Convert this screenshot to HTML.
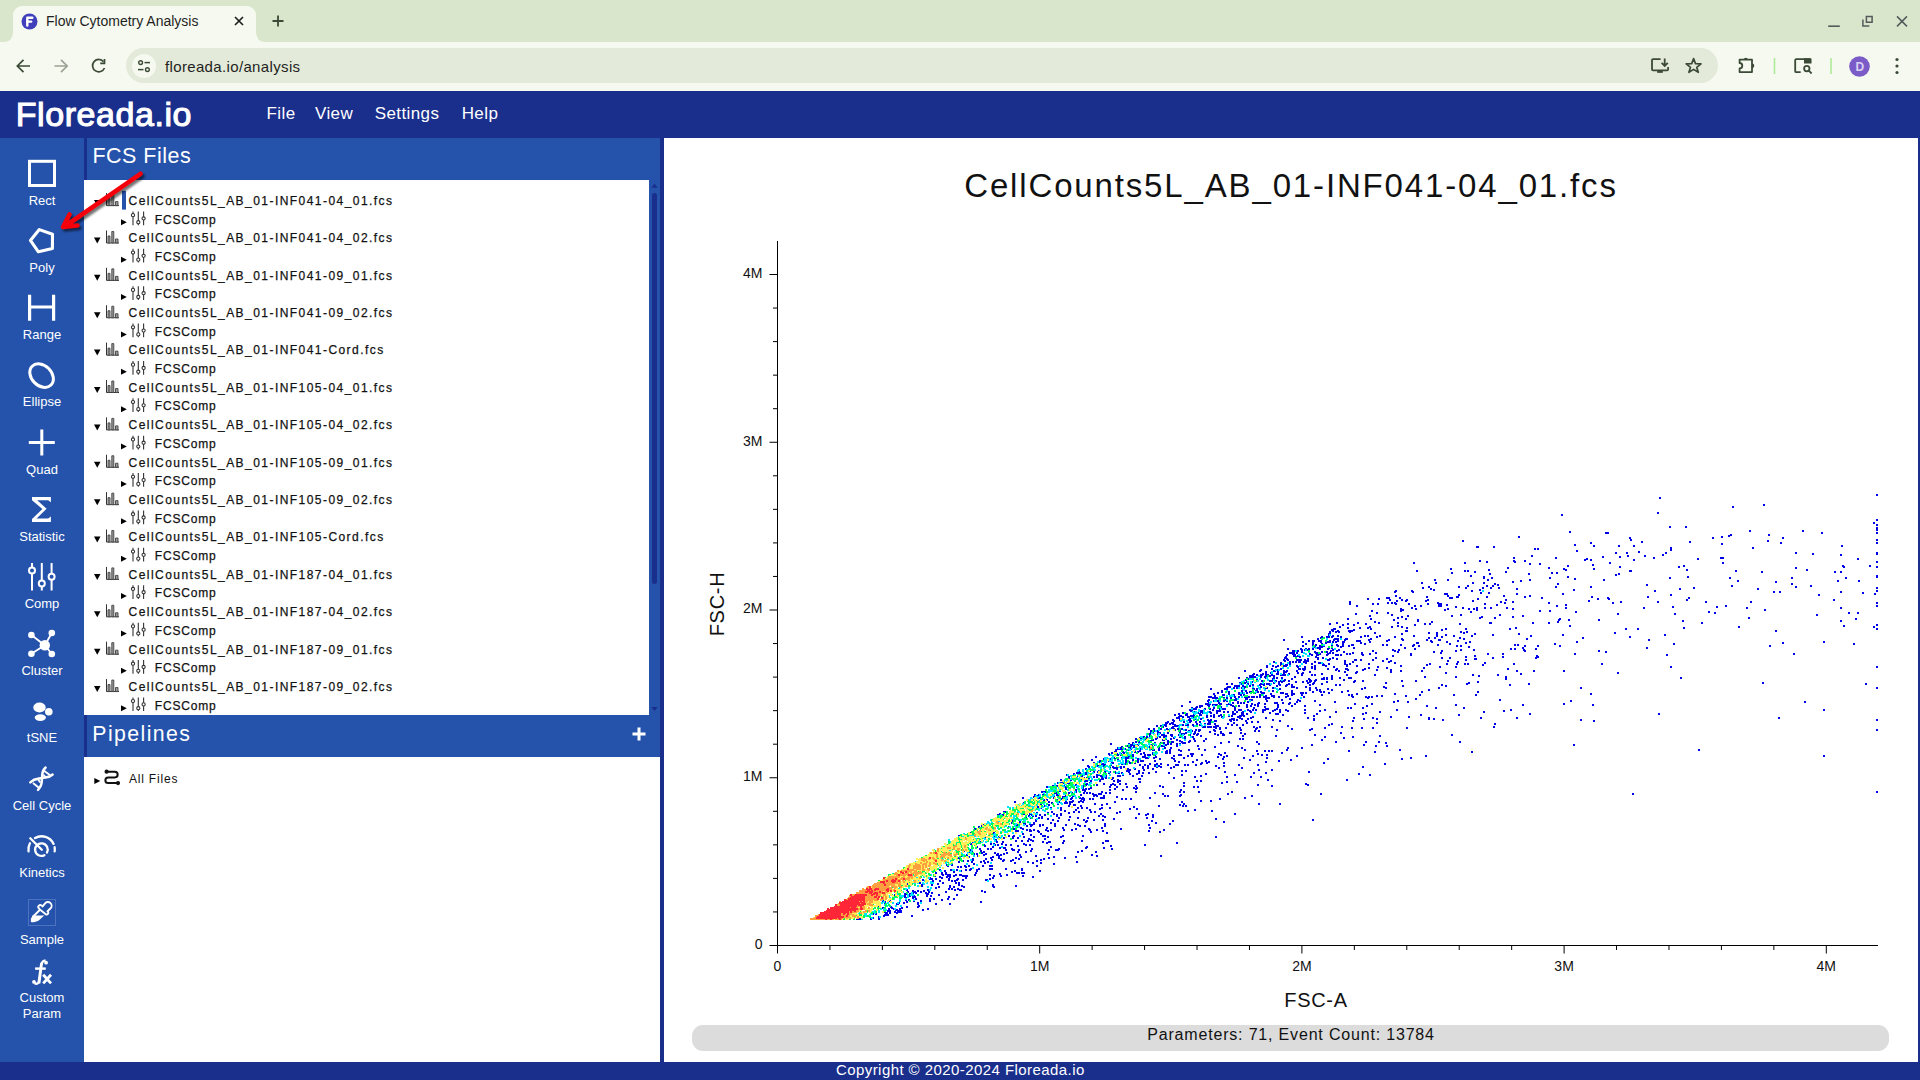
<!DOCTYPE html><html><head><meta charset="utf-8"><style>
html,body{margin:0;padding:0;width:1920px;height:1080px;overflow:hidden;background:#fff;font-family:"Liberation Sans",sans-serif}
.t{position:absolute;line-height:1;white-space:nowrap}
.r{position:absolute}
svg{position:absolute;overflow:visible}
</style></head><body>
<div class="r" style="left:0px;top:0px;width:1920px;height:42px;background:#d9e6cc;"></div>
<div class="r" style="left:13px;top:6px;width:243px;height:36px;background:#f6f9ef;border-radius:9px 9px 0 0"></div>
<svg style="left:0;top:30px" width="280" height="12"><path d="M3 12 Q13 12 13 2 L13 12Z" fill="#f6f9ef"/><path d="M266 12 Q256 12 256 2 L256 12Z" fill="#f6f9ef"/></svg>
<svg style="left:21px;top:13px" width="17" height="17" viewBox="0 0 17 17"><circle cx="8.5" cy="8.5" r="8" fill="#4040bd"/><path d="M6.3 12.6V4.8h5" stroke="#fff" stroke-width="2.4" fill="none" stroke-linecap="round" stroke-linejoin="round"/><path d="M6.3 8.7h4" stroke="#fff" stroke-width="2.2" stroke-linecap="round"/></svg>
<div class="t" style="left:46.00px;top:14.45px;font-size:14px;color:#1f1f1f;">Flow Cytometry Analysis</div>
<svg style="left:234px;top:16px" width="10" height="10"><path d="M1 1L9 9M9 1L1 9" stroke="#1f1f1f" stroke-width="1.7"/></svg>
<svg style="left:272px;top:15px" width="12" height="12"><path d="M6 0.5V11.5M0.5 6H11.5" stroke="#3b4a36" stroke-width="1.8"/></svg>
<svg style="left:1820px;top:8px" width="95" height="30" viewBox="1820 8 95 30" stroke="#55595c" fill="none"><path d="M1828.2 26.2H1839.8" stroke-width="1.6"/><path d="M1866.4 16.4H1872.1V22.2H1866.4Z" stroke-width="1.5"/><path d="M1862.9 19.5V26H1869.3" stroke-width="1.5"/><path d="M1897 16.4L1907 26.4M1907 16.4L1897 26.4" stroke-width="1.5"/></svg>
<div class="r" style="left:0px;top:42px;width:1920px;height:49px;background:#f6f9ef;"></div>
<div class="r" style="left:126px;top:48px;width:1592px;height:35px;background:#e3ead9;border-radius:17.5px"></div>
<svg style="left:132px;top:54px" width="24" height="24"><circle cx="12" cy="12" r="12" fill="#f6f9ef"/><circle cx="8.6" cy="8.6" r="1.9" stroke="#3b4a36" stroke-width="1.4" fill="none"/><path d="M12.5 8.6H18" stroke="#3b4a36" stroke-width="1.5"/><circle cx="15.4" cy="15.6" r="1.9" stroke="#3b4a36" stroke-width="1.4" fill="none"/><path d="M6 15.6H11.5" stroke="#3b4a36" stroke-width="1.5"/></svg>
<svg style="left:12px;top:55px" width="100" height="22"><path d="M5.5 11H18M11.5 4.8L5.3 11L11.5 17.2" stroke="#3b4a36" stroke-width="1.7" fill="none"/><path d="M42.5 11H55M49 4.8L55.2 11L49 17.2" stroke="#9aa294" stroke-width="1.7" fill="none"/><path d="M91.5 6.6A6.2 6.2 0 1 0 92.5 13" stroke="#3b4a36" stroke-width="1.7" fill="none"/><path d="M92.5 4V8.3H88.2" stroke="#3b4a36" stroke-width="1.7" fill="none"/></svg>
<div class="t" style="left:165.00px;top:58.60px;font-size:15px;color:#1f1f1f;letter-spacing:0.35px;">floreada.io/analysis</div>
<svg style="left:1640px;top:50px" width="275" height="32" viewBox="1640 50 275 32"><path d="M1660.6 59.1H1653A1 1 0 0 0 1652 60.1V69.3A1 1 0 0 0 1653 70.3H1667.1A1 1 0 0 0 1668.1 69.3V66.9" stroke="#3b4a36" stroke-width="1.8" fill="none"/><path d="M1657.2 71.9H1662.8" stroke="#3b4a36" stroke-width="1.9"/><path d="M1664.7 58.4V65.8M1661.6 62.8L1664.7 65.9L1667.8 62.8" stroke="#3b4a36" stroke-width="1.8" fill="none"/><path d="M1693.6 58.6L1695.5 63.6L1701 63.9L1696.7 67.3L1698.3 72.3L1693.6 69.4L1688.9 72.3L1690.5 67.3L1686.2 63.9L1691.7 63.6Z" stroke="#3b4a36" stroke-width="1.7" fill="none" stroke-linejoin="round"/><path d="M1739.6 59.6H1752V72.1H1739.6V68.4A2.7 2.7 0 0 0 1739.6 63Z" stroke="#3b4a36" stroke-width="1.8" fill="none" stroke-linejoin="round"/><path d="M1743.8 59.8A2 2 0 0 1 1747.8 59.8Z M1752 63.4A2.3 2.3 0 0 1 1752 68Z" fill="#3b4a36"/><path d="M1774.5 58V74" stroke="#aeea98" stroke-width="1.6"/><path d="M1800.7 72.2H1796.2A1 1 0 0 1 1795.2 71.2V60.2A1 1 0 0 1 1796.2 59.2H1810.5" stroke="#3b4a36" stroke-width="1.8" fill="none"/><path d="M1804 58.3H1810.3A1.2 1.2 0 0 1 1811.5 59.5V63.5H1804Z" fill="#3b4a36"/><circle cx="1806.8" cy="68.6" r="2.7" stroke="#3b4a36" stroke-width="1.8" fill="none"/><path d="M1808.8 70.7L1811.6 73.5" stroke="#3b4a36" stroke-width="1.8"/><path d="M1831 58V74" stroke="#aeea98" stroke-width="1.6"/><circle cx="1859.5" cy="66.5" r="10.3" fill="#7b5bc7"/><text x="1859.8" y="71" font-size="12" font-weight="700" font-family="Liberation Sans" fill="#dcd2f2" text-anchor="middle">D</text><circle cx="1897" cy="59.5" r="1.6" fill="#3b4a36"/><circle cx="1897" cy="66" r="1.6" fill="#3b4a36"/><circle cx="1897" cy="72.5" r="1.6" fill="#3b4a36"/></svg>
<div class="r" style="left:0px;top:91px;width:1920px;height:47px;background:#1a2e8c;"></div>
<div class="t" style="left:15.80px;top:96.52px;font-size:34px;color:#fff;letter-spacing:0.55px;-webkit-text-stroke:1.1px #fff;">Floreada.io</div>
<div class="t" style="left:266.50px;top:105.41px;font-size:17px;color:#fff;letter-spacing:0.4px;">File</div>
<div class="t" style="left:315.00px;top:105.41px;font-size:17px;color:#fff;letter-spacing:0.4px;">View</div>
<div class="t" style="left:374.70px;top:105.41px;font-size:17px;color:#fff;letter-spacing:0.4px;">Settings</div>
<div class="t" style="left:461.70px;top:105.41px;font-size:17px;color:#fff;letter-spacing:0.4px;">Help</div>
<div class="r" style="left:0px;top:138px;width:84px;height:924px;background:#2553ab;"></div>
<div class="t" style="left:-958.00px;width:2000px;text-align:center;top:193.80px;font-size:13px;color:#fff;">Rect</div>
<div class="t" style="left:-958.00px;width:2000px;text-align:center;top:261.00px;font-size:13px;color:#fff;">Poly</div>
<div class="t" style="left:-958.00px;width:2000px;text-align:center;top:328.20px;font-size:13px;color:#fff;">Range</div>
<div class="t" style="left:-958.00px;width:2000px;text-align:center;top:395.40px;font-size:13px;color:#fff;">Ellipse</div>
<div class="t" style="left:-958.00px;width:2000px;text-align:center;top:462.60px;font-size:13px;color:#fff;">Quad</div>
<div class="t" style="left:-958.00px;width:2000px;text-align:center;top:529.80px;font-size:13px;color:#fff;">Statistic</div>
<div class="t" style="left:-958.00px;width:2000px;text-align:center;top:597.00px;font-size:13px;color:#fff;">Comp</div>
<div class="t" style="left:-958.00px;width:2000px;text-align:center;top:664.20px;font-size:13px;color:#fff;">Cluster</div>
<div class="t" style="left:-958.00px;width:2000px;text-align:center;top:731.40px;font-size:13px;color:#fff;">tSNE</div>
<div class="t" style="left:-958.00px;width:2000px;text-align:center;top:798.60px;font-size:13px;color:#fff;">Cell Cycle</div>
<div class="t" style="left:-958.00px;width:2000px;text-align:center;top:865.80px;font-size:13px;color:#fff;">Kinetics</div>
<div class="t" style="left:-958.00px;width:2000px;text-align:center;top:933.00px;font-size:13px;color:#fff;">Sample</div>
<div class="t" style="left:-958.00px;width:2000px;text-align:center;top:990.70px;font-size:13px;color:#fff;">Custom</div>
<div class="t" style="left:-958.00px;width:2000px;text-align:center;top:1007.00px;font-size:13px;color:#fff;">Param</div>
<svg style="left:0;top:138px" width="84" height="900" viewBox="0 138 84 900"><rect x="29.5" y="161.3" width="25" height="24.2" stroke="#fff" stroke-width="3" fill="none"/><path d="M39.3 229.6L52.5 234.3L52.4 248.4L38.4 251.8L30.4 240.4Z" stroke="#fff" stroke-width="3.1" fill="none" stroke-linejoin="round"/><path d="M29.6 294.8V320.8M53.6 294.8V320.8M29.6 307H53.6" stroke="#fff" stroke-width="3.2" fill="none"/><ellipse cx="41.6" cy="375.6" rx="13.3" ry="10" transform="rotate(45 41.6 375.6)" stroke="#fff" stroke-width="3" fill="none"/><path d="M41.8 429.6V455.6M28.8 442.6H54.8" stroke="#fff" stroke-width="3" fill="none"/><path d="M32 496.9H50.9V502.3L48.2 500.2H37.2L46.6 508.8L36.6 518.6H48.2L50.9 516.5V521.9H32V519.1L42.4 509L32 500.2Z" fill="#fff"/><path d="M32 563V567.5M32 573.5V590.4M41.8 563V580.5M41.8 586.5V590.4M51.6 563V573.8M51.6 579.8V590.4" stroke="#fff" stroke-width="2" fill="none"/><circle cx="32" cy="570.5" r="3" stroke="#fff" stroke-width="2" fill="none"/><circle cx="41.8" cy="583.5" r="3" stroke="#fff" stroke-width="2" fill="none"/><circle cx="51.6" cy="576.8" r="3" stroke="#fff" stroke-width="2" fill="none"/><path d="M31.4 635L44.8 645.3L51.8 633M31.4 653.8L44.8 645.3L51.8 654" stroke="#fff" stroke-width="1.8" fill="none"/><circle cx="44.8" cy="645.3" r="5.2" fill="#fff"/><circle cx="31.4" cy="635" r="3.3" fill="#fff"/><circle cx="51.8" cy="633" r="3.3" fill="#fff"/><circle cx="31.4" cy="653.8" r="3.3" fill="#fff"/><circle cx="51.8" cy="654" r="3.3" fill="#fff"/><ellipse cx="39.5" cy="707.5" rx="6.2" ry="5" fill="#fff"/><circle cx="48.8" cy="711.8" r="3.8" fill="#fff"/><ellipse cx="40.3" cy="717.6" rx="5.6" ry="3.4" fill="#fff"/><g stroke="#fff" fill="none" stroke-width="2.5" stroke-linecap="round"><path d="M45.6 767.5C41 772 42.5 776 42 778C41.5 781 43 785 38 789.8"/><path d="M30.3 782.3C35 778 38 779 42 778C46 777 49 778 52.6 774.5"/><path d="M44.3 771L49.2 774.6M44 775.2L45.4 777.2M33.6 783.4L38.3 787.3M38.5 780L39.9 782" stroke-width="1.9"/></g><g stroke="#fff" fill="none" stroke-width="2.3" stroke-linecap="round"><path d="M28.53 851.34A13.2 13.2 0 0 1 29.95 843.30M35.00 838.07A13.2 13.2 0 0 1 53.56 843.92M54.60 847.21A13.2 13.2 0 0 1 54.67 851.34M44.36 855.16A6.3 6.3 0 1 1 46.96 852.56M30.3 838.2L41.8 849.7"/></g><rect x="28.5" y="899.5" width="27" height="26" stroke="#4d73c0" stroke-width="1" fill="none"/><g stroke="#fff" stroke-width="1.9" fill="none" stroke-linejoin="round"><path d="M40.2 909.8L38.9 908.3A1.9 1.9 0 0 1 41.6 905.6L42.6 906.4L45.3 903.2A3.6 3.6 0 0 1 50.6 908.3L47.5 911.3L48.2 912A1.9 1.9 0 0 1 46 914.6Z"/><path d="M40 909.8L33.2 916.5C32 918 31.5 920.5 31.8 921.8"/></g><path d="M32.6 915.4H44.2L38.8 920.5C36.5 921.8 33.5 922.5 31.3 922.3C31 920 31.8 917 32.6 915.4Z" fill="#fff"/></svg>
<svg style="left:0;top:950px" width="84" height="40" viewBox="0 950 84 40"><g fill="#fff"><path d="M40.2 962.8H43.1L40.4 983.4H37.3Z"/><rect x="35.1" y="967.4" width="10.7" height="2.4"/><circle cx="46.1" cy="962.7" r="1.9"/><circle cx="34.0" cy="981.9" r="1.9"/></g><g stroke="#fff" fill="none" stroke-width="2.3"><path d="M41.6 964.5C42 961.6 43.6 960.3 45.6 960.6"/><path d="M38.9 982C38.3 983.8 36.3 984.2 34.6 983.2"/><path d="M43.2 974.8L51 983.4M51 974.8L43.2 983.4" stroke-width="2.8"/></g></svg>
<div class="r" style="left:84px;top:138px;width:576px;height:42px;background:#2553ab;border-left:3px solid #1a2e8c;box-sizing:border-box"></div>
<div class="t" style="left:92.40px;top:145.60px;font-size:21.5px;color:#fff;letter-spacing:0.5px;">FCS Files</div>
<div class="r" style="left:84px;top:180px;width:565px;height:535px;background:#fff;"></div>
<div class="r" style="left:649px;top:180px;width:11px;height:535px;background:#2553ab;"></div>
<div class="r" style="left:652px;top:193px;width:5px;height:391px;background:#1a2e8c;border-radius:2.5px"></div>
<svg style="left:649px;top:180px" width="11" height="535"><path d="M2.2 7.8L5.5 3.8L8.8 7.8Z" fill="#1a2e8c"/><path d="M2.2 527L5.5 531L8.8 527Z" fill="#1a2e8c"/></svg>
<div class="r" style="left:660px;top:138px;width:4px;height:924px;background:#1a2e8c;"></div>
<div class="r" style="left:84px;top:715px;width:576px;height:42px;background:#2553ab;border-left:3px solid #1a2e8c;box-sizing:border-box"></div>
<div class="t" style="left:92.30px;top:723.77px;font-size:21.3px;color:#fff;letter-spacing:1.4px;">Pipelines</div>
<svg style="left:630px;top:725px" width="18" height="18"><path d="M9 2.5V15.5M2.5 9H15.5" stroke="#fff" stroke-width="3"/></svg>
<div class="r" style="left:84px;top:757px;width:576px;height:305px;background:#fff;"></div>
<div class="r" style="left:1918px;top:138px;width:2px;height:924px;background:#1a2e8c;"></div>
<div class="r" style="left:0px;top:1062px;width:1920px;height:18px;background:#1a2e8c;"></div>
<div class="t" style="left:-39.70px;width:2000px;text-align:center;top:1062.00px;font-size:15px;color:#fff;letter-spacing:0.43px;">Copyright © 2020-2024 Floreada.io</div>
<div class="t" style="left:128.60px;top:194.94px;font-size:12px;color:#111;letter-spacing:1.45px;-webkit-text-stroke:0.25px #111;">CellCounts5L_AB_01-INF041-04_01.fcs</div>
<div class="t" style="left:154.80px;top:213.59px;font-size:12px;color:#111;letter-spacing:0.82px;-webkit-text-stroke:0.25px #111;">FCSComp</div>
<div class="t" style="left:128.60px;top:232.32px;font-size:12px;color:#111;letter-spacing:1.45px;-webkit-text-stroke:0.25px #111;">CellCounts5L_AB_01-INF041-04_02.fcs</div>
<div class="t" style="left:154.80px;top:250.97px;font-size:12px;color:#111;letter-spacing:0.82px;-webkit-text-stroke:0.25px #111;">FCSComp</div>
<div class="t" style="left:128.60px;top:269.70px;font-size:12px;color:#111;letter-spacing:1.45px;-webkit-text-stroke:0.25px #111;">CellCounts5L_AB_01-INF041-09_01.fcs</div>
<div class="t" style="left:154.80px;top:288.35px;font-size:12px;color:#111;letter-spacing:0.82px;-webkit-text-stroke:0.25px #111;">FCSComp</div>
<div class="t" style="left:128.60px;top:307.08px;font-size:12px;color:#111;letter-spacing:1.45px;-webkit-text-stroke:0.25px #111;">CellCounts5L_AB_01-INF041-09_02.fcs</div>
<div class="t" style="left:154.80px;top:325.73px;font-size:12px;color:#111;letter-spacing:0.82px;-webkit-text-stroke:0.25px #111;">FCSComp</div>
<div class="t" style="left:128.60px;top:344.46px;font-size:12px;color:#111;letter-spacing:1.45px;-webkit-text-stroke:0.25px #111;">CellCounts5L_AB_01-INF041-Cord.fcs</div>
<div class="t" style="left:154.80px;top:363.11px;font-size:12px;color:#111;letter-spacing:0.82px;-webkit-text-stroke:0.25px #111;">FCSComp</div>
<div class="t" style="left:128.60px;top:381.84px;font-size:12px;color:#111;letter-spacing:1.45px;-webkit-text-stroke:0.25px #111;">CellCounts5L_AB_01-INF105-04_01.fcs</div>
<div class="t" style="left:154.80px;top:400.49px;font-size:12px;color:#111;letter-spacing:0.82px;-webkit-text-stroke:0.25px #111;">FCSComp</div>
<div class="t" style="left:128.60px;top:419.22px;font-size:12px;color:#111;letter-spacing:1.45px;-webkit-text-stroke:0.25px #111;">CellCounts5L_AB_01-INF105-04_02.fcs</div>
<div class="t" style="left:154.80px;top:437.87px;font-size:12px;color:#111;letter-spacing:0.82px;-webkit-text-stroke:0.25px #111;">FCSComp</div>
<div class="t" style="left:128.60px;top:456.60px;font-size:12px;color:#111;letter-spacing:1.45px;-webkit-text-stroke:0.25px #111;">CellCounts5L_AB_01-INF105-09_01.fcs</div>
<div class="t" style="left:154.80px;top:475.25px;font-size:12px;color:#111;letter-spacing:0.82px;-webkit-text-stroke:0.25px #111;">FCSComp</div>
<div class="t" style="left:128.60px;top:493.98px;font-size:12px;color:#111;letter-spacing:1.45px;-webkit-text-stroke:0.25px #111;">CellCounts5L_AB_01-INF105-09_02.fcs</div>
<div class="t" style="left:154.80px;top:512.63px;font-size:12px;color:#111;letter-spacing:0.82px;-webkit-text-stroke:0.25px #111;">FCSComp</div>
<div class="t" style="left:128.60px;top:531.36px;font-size:12px;color:#111;letter-spacing:1.45px;-webkit-text-stroke:0.25px #111;">CellCounts5L_AB_01-INF105-Cord.fcs</div>
<div class="t" style="left:154.80px;top:550.01px;font-size:12px;color:#111;letter-spacing:0.82px;-webkit-text-stroke:0.25px #111;">FCSComp</div>
<div class="t" style="left:128.60px;top:568.74px;font-size:12px;color:#111;letter-spacing:1.45px;-webkit-text-stroke:0.25px #111;">CellCounts5L_AB_01-INF187-04_01.fcs</div>
<div class="t" style="left:154.80px;top:587.39px;font-size:12px;color:#111;letter-spacing:0.82px;-webkit-text-stroke:0.25px #111;">FCSComp</div>
<div class="t" style="left:128.60px;top:606.12px;font-size:12px;color:#111;letter-spacing:1.45px;-webkit-text-stroke:0.25px #111;">CellCounts5L_AB_01-INF187-04_02.fcs</div>
<div class="t" style="left:154.80px;top:624.77px;font-size:12px;color:#111;letter-spacing:0.82px;-webkit-text-stroke:0.25px #111;">FCSComp</div>
<div class="t" style="left:128.60px;top:643.50px;font-size:12px;color:#111;letter-spacing:1.45px;-webkit-text-stroke:0.25px #111;">CellCounts5L_AB_01-INF187-09_01.fcs</div>
<div class="t" style="left:154.80px;top:662.15px;font-size:12px;color:#111;letter-spacing:0.82px;-webkit-text-stroke:0.25px #111;">FCSComp</div>
<div class="t" style="left:128.60px;top:680.88px;font-size:12px;color:#111;letter-spacing:1.45px;-webkit-text-stroke:0.25px #111;">CellCounts5L_AB_01-INF187-09_02.fcs</div>
<div class="t" style="left:154.80px;top:699.53px;font-size:12px;color:#111;letter-spacing:0.82px;-webkit-text-stroke:0.25px #111;">FCSComp</div>
<svg style="left:84px;top:180px" width="565" height="535" viewBox="84 180 565 535"><path d="M94 200.10H100.5L97.25 206.10Z" fill="#000"/><path d="M106.5 193.10V205.60H119" stroke="#333" stroke-width="1" fill="none"/><path d="M108 198.60h2v7h-2z M111.8 194.10h2v11.5h-2z M115.5 201.60h2.5v4h-2.5z" stroke="#444" stroke-width="0.9" fill="#999"/><path d="M121 219.25V225.25L126.8 222.25Z" fill="#000"/><g stroke="#333" stroke-width="1.1" fill="none"><path d="M133 211.45V225.15M138.3 211.45V225.15M143.6 211.45V225.15"/><circle cx="133" cy="215.15" r="1.6" fill="#fff"/><circle cx="138.3" cy="222.25" r="1.6" fill="#fff"/><circle cx="143.6" cy="218.45" r="1.6" fill="#fff"/></g><path d="M94 237.48H100.5L97.25 243.48Z" fill="#000"/><path d="M106.5 230.48V242.98H119" stroke="#333" stroke-width="1" fill="none"/><path d="M108 235.98h2v7h-2z M111.8 231.48h2v11.5h-2z M115.5 238.98h2.5v4h-2.5z" stroke="#444" stroke-width="0.9" fill="#999"/><path d="M121 256.63V262.63L126.8 259.63Z" fill="#000"/><g stroke="#333" stroke-width="1.1" fill="none"><path d="M133 248.83V262.53M138.3 248.83V262.53M143.6 248.83V262.53"/><circle cx="133" cy="252.53" r="1.6" fill="#fff"/><circle cx="138.3" cy="259.63" r="1.6" fill="#fff"/><circle cx="143.6" cy="255.83" r="1.6" fill="#fff"/></g><path d="M94 274.86H100.5L97.25 280.86Z" fill="#000"/><path d="M106.5 267.86V280.36H119" stroke="#333" stroke-width="1" fill="none"/><path d="M108 273.36h2v7h-2z M111.8 268.86h2v11.5h-2z M115.5 276.36h2.5v4h-2.5z" stroke="#444" stroke-width="0.9" fill="#999"/><path d="M121 294.01V300.01L126.8 297.01Z" fill="#000"/><g stroke="#333" stroke-width="1.1" fill="none"><path d="M133 286.21V299.91M138.3 286.21V299.91M143.6 286.21V299.91"/><circle cx="133" cy="289.91" r="1.6" fill="#fff"/><circle cx="138.3" cy="297.01" r="1.6" fill="#fff"/><circle cx="143.6" cy="293.21" r="1.6" fill="#fff"/></g><path d="M94 312.24H100.5L97.25 318.24Z" fill="#000"/><path d="M106.5 305.24V317.74H119" stroke="#333" stroke-width="1" fill="none"/><path d="M108 310.74h2v7h-2z M111.8 306.24h2v11.5h-2z M115.5 313.74h2.5v4h-2.5z" stroke="#444" stroke-width="0.9" fill="#999"/><path d="M121 331.39V337.39L126.8 334.39Z" fill="#000"/><g stroke="#333" stroke-width="1.1" fill="none"><path d="M133 323.59V337.29M138.3 323.59V337.29M143.6 323.59V337.29"/><circle cx="133" cy="327.29" r="1.6" fill="#fff"/><circle cx="138.3" cy="334.39" r="1.6" fill="#fff"/><circle cx="143.6" cy="330.59" r="1.6" fill="#fff"/></g><path d="M94 349.62H100.5L97.25 355.62Z" fill="#000"/><path d="M106.5 342.62V355.12H119" stroke="#333" stroke-width="1" fill="none"/><path d="M108 348.12h2v7h-2z M111.8 343.62h2v11.5h-2z M115.5 351.12h2.5v4h-2.5z" stroke="#444" stroke-width="0.9" fill="#999"/><path d="M121 368.77V374.77L126.8 371.77Z" fill="#000"/><g stroke="#333" stroke-width="1.1" fill="none"><path d="M133 360.97V374.67M138.3 360.97V374.67M143.6 360.97V374.67"/><circle cx="133" cy="364.67" r="1.6" fill="#fff"/><circle cx="138.3" cy="371.77" r="1.6" fill="#fff"/><circle cx="143.6" cy="367.97" r="1.6" fill="#fff"/></g><path d="M94 387.00H100.5L97.25 393.00Z" fill="#000"/><path d="M106.5 380.00V392.50H119" stroke="#333" stroke-width="1" fill="none"/><path d="M108 385.50h2v7h-2z M111.8 381.00h2v11.5h-2z M115.5 388.50h2.5v4h-2.5z" stroke="#444" stroke-width="0.9" fill="#999"/><path d="M121 406.15V412.15L126.8 409.15Z" fill="#000"/><g stroke="#333" stroke-width="1.1" fill="none"><path d="M133 398.35V412.05M138.3 398.35V412.05M143.6 398.35V412.05"/><circle cx="133" cy="402.05" r="1.6" fill="#fff"/><circle cx="138.3" cy="409.15" r="1.6" fill="#fff"/><circle cx="143.6" cy="405.35" r="1.6" fill="#fff"/></g><path d="M94 424.38H100.5L97.25 430.38Z" fill="#000"/><path d="M106.5 417.38V429.88H119" stroke="#333" stroke-width="1" fill="none"/><path d="M108 422.88h2v7h-2z M111.8 418.38h2v11.5h-2z M115.5 425.88h2.5v4h-2.5z" stroke="#444" stroke-width="0.9" fill="#999"/><path d="M121 443.53V449.53L126.8 446.53Z" fill="#000"/><g stroke="#333" stroke-width="1.1" fill="none"><path d="M133 435.73V449.43M138.3 435.73V449.43M143.6 435.73V449.43"/><circle cx="133" cy="439.43" r="1.6" fill="#fff"/><circle cx="138.3" cy="446.53" r="1.6" fill="#fff"/><circle cx="143.6" cy="442.73" r="1.6" fill="#fff"/></g><path d="M94 461.76H100.5L97.25 467.76Z" fill="#000"/><path d="M106.5 454.76V467.26H119" stroke="#333" stroke-width="1" fill="none"/><path d="M108 460.26h2v7h-2z M111.8 455.76h2v11.5h-2z M115.5 463.26h2.5v4h-2.5z" stroke="#444" stroke-width="0.9" fill="#999"/><path d="M121 480.91V486.91L126.8 483.91Z" fill="#000"/><g stroke="#333" stroke-width="1.1" fill="none"><path d="M133 473.11V486.81M138.3 473.11V486.81M143.6 473.11V486.81"/><circle cx="133" cy="476.81" r="1.6" fill="#fff"/><circle cx="138.3" cy="483.91" r="1.6" fill="#fff"/><circle cx="143.6" cy="480.11" r="1.6" fill="#fff"/></g><path d="M94 499.14H100.5L97.25 505.14Z" fill="#000"/><path d="M106.5 492.14V504.64H119" stroke="#333" stroke-width="1" fill="none"/><path d="M108 497.64h2v7h-2z M111.8 493.14h2v11.5h-2z M115.5 500.64h2.5v4h-2.5z" stroke="#444" stroke-width="0.9" fill="#999"/><path d="M121 518.29V524.29L126.8 521.29Z" fill="#000"/><g stroke="#333" stroke-width="1.1" fill="none"><path d="M133 510.49V524.19M138.3 510.49V524.19M143.6 510.49V524.19"/><circle cx="133" cy="514.19" r="1.6" fill="#fff"/><circle cx="138.3" cy="521.29" r="1.6" fill="#fff"/><circle cx="143.6" cy="517.49" r="1.6" fill="#fff"/></g><path d="M94 536.52H100.5L97.25 542.52Z" fill="#000"/><path d="M106.5 529.52V542.02H119" stroke="#333" stroke-width="1" fill="none"/><path d="M108 535.02h2v7h-2z M111.8 530.52h2v11.5h-2z M115.5 538.02h2.5v4h-2.5z" stroke="#444" stroke-width="0.9" fill="#999"/><path d="M121 555.67V561.67L126.8 558.67Z" fill="#000"/><g stroke="#333" stroke-width="1.1" fill="none"><path d="M133 547.87V561.57M138.3 547.87V561.57M143.6 547.87V561.57"/><circle cx="133" cy="551.57" r="1.6" fill="#fff"/><circle cx="138.3" cy="558.67" r="1.6" fill="#fff"/><circle cx="143.6" cy="554.87" r="1.6" fill="#fff"/></g><path d="M94 573.90H100.5L97.25 579.90Z" fill="#000"/><path d="M106.5 566.90V579.40H119" stroke="#333" stroke-width="1" fill="none"/><path d="M108 572.40h2v7h-2z M111.8 567.90h2v11.5h-2z M115.5 575.40h2.5v4h-2.5z" stroke="#444" stroke-width="0.9" fill="#999"/><path d="M121 593.05V599.05L126.8 596.05Z" fill="#000"/><g stroke="#333" stroke-width="1.1" fill="none"><path d="M133 585.25V598.95M138.3 585.25V598.95M143.6 585.25V598.95"/><circle cx="133" cy="588.95" r="1.6" fill="#fff"/><circle cx="138.3" cy="596.05" r="1.6" fill="#fff"/><circle cx="143.6" cy="592.25" r="1.6" fill="#fff"/></g><path d="M94 611.28H100.5L97.25 617.28Z" fill="#000"/><path d="M106.5 604.28V616.78H119" stroke="#333" stroke-width="1" fill="none"/><path d="M108 609.78h2v7h-2z M111.8 605.28h2v11.5h-2z M115.5 612.78h2.5v4h-2.5z" stroke="#444" stroke-width="0.9" fill="#999"/><path d="M121 630.43V636.43L126.8 633.43Z" fill="#000"/><g stroke="#333" stroke-width="1.1" fill="none"><path d="M133 622.63V636.33M138.3 622.63V636.33M143.6 622.63V636.33"/><circle cx="133" cy="626.33" r="1.6" fill="#fff"/><circle cx="138.3" cy="633.43" r="1.6" fill="#fff"/><circle cx="143.6" cy="629.63" r="1.6" fill="#fff"/></g><path d="M94 648.66H100.5L97.25 654.66Z" fill="#000"/><path d="M106.5 641.66V654.16H119" stroke="#333" stroke-width="1" fill="none"/><path d="M108 647.16h2v7h-2z M111.8 642.66h2v11.5h-2z M115.5 650.16h2.5v4h-2.5z" stroke="#444" stroke-width="0.9" fill="#999"/><path d="M121 667.81V673.81L126.8 670.81Z" fill="#000"/><g stroke="#333" stroke-width="1.1" fill="none"><path d="M133 660.01V673.71M138.3 660.01V673.71M143.6 660.01V673.71"/><circle cx="133" cy="663.71" r="1.6" fill="#fff"/><circle cx="138.3" cy="670.81" r="1.6" fill="#fff"/><circle cx="143.6" cy="667.01" r="1.6" fill="#fff"/></g><path d="M94 686.04H100.5L97.25 692.04Z" fill="#000"/><path d="M106.5 679.04V691.54H119" stroke="#333" stroke-width="1" fill="none"/><path d="M108 684.54h2v7h-2z M111.8 680.04h2v11.5h-2z M115.5 687.54h2.5v4h-2.5z" stroke="#444" stroke-width="0.9" fill="#999"/><path d="M121 705.19V711.19L126.8 708.19Z" fill="#000"/><g stroke="#333" stroke-width="1.1" fill="none"><path d="M133 697.39V711.09M138.3 697.39V711.09M143.6 697.39V711.09"/><circle cx="133" cy="701.09" r="1.6" fill="#fff"/><circle cx="138.3" cy="708.19" r="1.6" fill="#fff"/><circle cx="143.6" cy="704.39" r="1.6" fill="#fff"/></g><rect x="122" y="190.8" width="4" height="18.8" fill="#2553ab"/></svg>
<svg style="left:84px;top:757px" width="200" height="40" viewBox="84 757 200 40"><path d="M94.3 778V784L100.3 781Z" fill="#000"/><g stroke="#111" stroke-width="2" fill="none"><path d="M106.5 771.7H114.8A2.85 2.85 0 0 1 114.8 777.4H108.2A2.85 2.85 0 0 0 108.2 783.1H118"/></g><circle cx="106.6" cy="771.7" r="2.1" fill="#111"/><circle cx="118" cy="783.1" r="2.1" fill="#111"/></svg>
<div class="t" style="left:129.00px;top:772.84px;font-size:12px;color:#111;letter-spacing:0.8px;">All Files</div>
<div class="r" style="left:664px;top:138px;width:1254px;height:924px;background:#fff;"></div>
<div class="t" style="left:291.00px;width:2000px;text-align:center;top:168.77px;font-size:33px;color:#111;letter-spacing:1.85px;">CellCounts5L_AB_01-INF041-04_01.fcs</div>
<svg style="left:664px;top:138px" width="1254" height="924" viewBox="664 138 1254 924"><path d="M1876 495h2M1659 498h2M1763 505h2M1732 507h2M1657 513h2M1561 515h2M1876 520h2M1873 523h2M1876 525h2M1669 527h2M1685 527h2M1876 528h2M1876 530h2M1749 531h2M1802 531h2M1569 532h2M1605 533h2M1607 533h2M1821 533h2M1876 533h2M1730 535h2M1768 535h2M1728 536h2M1518 537h2M1721 537h2M1629 538h2M1712 538h2M1782 538h2M1630 540h2M1876 540h2M1462 541h2M1767 541h2M1641 542h2M1689 542h2M1590 543h2M1780 543h2M1876 543h2M1721 544h2M1574 545h2M1593 546h2M1618 546h2M1633 546h2M1841 546h2M1476 547h2M1477 547h2M1493 547h2M1670 548h2M1752 548h2M1534 549h2M1537 549h2M1670 550h2M1576 551h2M1638 552h2M1615 553h2M1626 553h2M1665 553h2M1795 553h2M1876 553h2M1812 554h2M1876 554h2M1662 555h2M1840 555h2M1531 556h2M1627 556h2M1644 556h2M1602 557h2M1619 557h2M1513 558h2M1555 558h2M1653 558h2M1720 558h2M1722 558h2M1586 559h2M1697 559h2M1857 559h2M1584 560h2M1590 560h2M1633 560h2M1479 561h2M1513 561h2M1524 561h2M1486 562h2M1514 562h2M1876 562h2M1413 563h2M1464 563h2M1609 563h2M1722 563h2M1529 564h2M1539 564h2M1592 565h2M1567 566h2M1683 566h2M1842 566h2M1869 566h2M1619 567h2M1678 567h2M1843 567h2M1876 567h2M1507 568h2M1548 568h2M1795 568h2M1450 569h2M1563 569h2M1593 569h2M1488 570h2M1565 570h2M1686 570h2M1806 570h2M1416 571h2M1464 571h2M1467 571h2M1629 571h2M1630 571h2M1735 571h2M1474 572h2M1505 572h2M1761 572h2M1834 572h2M1840 572h2M1451 573h2M1551 573h2M1556 573h2M1489 574h2M1528 574h2M1618 574h2M1615 575h2M1470 576h2M1876 576h2M1483 577h2M1567 577h2M1687 577h2M1876 577h2M1483 578h2M1491 578h2M1549 578h2M1669 578h2M1729 578h2M1791 578h2M1845 578h2M1574 579h2M1434 580h2M1447 580h2M1487 580h2M1529 580h2M1603 580h2M1520 581h2M1737 581h2M1837 581h2M1858 581h2M1512 582h2M1775 582h2M1421 583h2M1435 583h2M1472 583h2M1483 583h2M1494 584h2M1557 584h2M1791 584h2M1497 585h2M1646 585h2M1467 586h2M1486 586h2M1492 586h2M1731 586h2M1810 586h2M1428 587h2M1458 587h2M1555 587h2M1590 587h2M1795 587h2M1422 588h2M1465 588h2M1482 588h2M1490 588h2M1498 588h2M1693 588h2M1876 588h2M1430 589h2M1516 589h2M1679 589h2M1757 589h2M1433 590h2M1479 590h2M1573 590h2M1395 591h2M1411 591h2M1471 591h2M1654 591h2M1876 591h2M1394 592h2M1412 592h2M1773 592h2M1779 592h2M1840 592h2M1480 593h2M1488 593h2M1862 593h2M1444 594h2M1446 594h2M1516 594h2M1562 594h2M1874 594h2M1458 595h2M1670 595h2M1818 595h2M1395 596h2M1447 596h2M1503 596h2M1529 596h2M1426 597h2M1456 597h2M1457 597h2M1486 597h2M1524 597h2M1591 597h2M1647 597h2M1386 598h2M1387 598h2M1388 598h2M1399 598h2M1449 598h2M1451 598h2M1541 598h2M1607 598h2M1688 598h2M1367 599h2M1378 599h2M1477 599h2M1597 599h2M1608 599h2M1389 600h2M1401 600h2M1406 600h2M1427 600h2M1505 600h2M1686 600h2M1833 600h2M1396 601h2M1405 601h2M1425 601h2M1472 601h2M1588 601h2M1349 602h2M1500 602h2M1512 602h2M1620 602h2M1657 602h2M1705 602h2M1750 602h2M1387 603h2M1391 603h2M1394 603h2M1437 603h2M1504 603h2M1548 603h2M1612 603h2M1876 603h2M1349 604h2M1372 604h2M1377 604h2M1395 604h2M1408 604h2M1427 604h2M1438 604h2M1440 604h2M1484 604h2M1446 605h2M1496 605h2M1565 605h2M1356 606h2M1414 606h2M1420 606h2M1438 606h2M1440 606h2M1556 606h2M1725 606h2M1876 606h2M1455 607h2M1672 607h2M1716 607h2M1411 608h2M1462 608h2M1476 608h2M1484 608h2M1490 608h2M1506 608h2M1565 608h2M1643 608h2M1746 608h2M1840 608h2M1400 609h2M1415 609h2M1447 609h2M1468 609h2M1473 609h2M1512 609h2M1402 610h2M1444 610h2M1476 610h2M1764 610h2M1371 611h2M1400 611h2M1539 611h2M1549 611h2M1470 612h2M1575 612h2M1708 612h2M1376 613h2M1387 613h2M1714 613h2M1848 613h2M1857 613h2M1355 614h2M1617 614h2M1674 614h2M1391 615h2M1460 615h2M1499 615h2M1816 615h2M1369 616h2M1407 616h2M1451 616h2M1522 616h2M1401 617h2M1481 617h2M1512 617h2M1397 618h2M1479 618h2M1494 618h2M1748 618h2M1347 619h2M1370 619h2M1405 619h2M1559 619h2M1855 619h2M1393 620h2M1417 620h2M1558 620h2M1568 620h2M1598 620h2M1417 621h2M1682 621h2M1840 621h2M1374 622h2M1431 622h2M1557 622h2M1336 623h2M1357 623h2M1378 623h2M1397 623h2M1489 623h2M1490 623h2M1532 623h2M1548 623h2M1701 623h2M1329 624h2M1347 624h2M1365 624h2M1424 624h2M1429 624h2M1459 624h2M1342 625h2M1353 625h2M1414 625h2M1876 625h2M1397 626h2M1569 626h2M1843 626h2M1339 627h2M1369 627h2M1391 627h2M1401 627h2M1738 627h2M1873 627h2M1347 628h2M1359 628h2M1367 628h2M1406 628h2M1515 628h2M1683 628h2M1333 629h2M1334 629h2M1370 629h2M1445 629h2M1465 629h2M1509 629h2M1625 629h2M1637 629h2M1876 629h2M1331 630h2M1353 630h2M1441 630h2M1332 631h2M1337 631h2M1348 631h2M1349 631h2M1351 631h2M1405 631h2M1406 631h2M1775 631h2M1329 632h2M1335 632h2M1338 632h2M1349 632h2M1460 632h2M1466 632h2M1329 633h2M1374 633h2M1428 633h2M1436 633h2M1463 633h2M1614 633h2M1328 634h2M1401 634h2M1474 634h2M1518 634h2M1436 635h2M1445 635h2M1492 635h2M1562 635h2M1664 635h2M1328 636h2M1332 636h2M1337 636h2M1364 636h2M1367 636h2M1379 636h2M1413 636h2M1436 636h2M1453 636h2M1471 636h2M1530 636h2M1301 637h2M1321 637h2M1326 637h2M1328 637h2M1331 637h2M1340 637h2M1360 637h2M1376 637h2M1394 637h2M1441 637h2M1629 637h2M1320 638h2M1428 638h2M1434 638h2M1459 638h2M1582 638h2M1317 639h2M1334 639h2M1336 639h2M1337 639h2M1345 639h2M1346 639h2M1370 639h2M1401 639h2M1463 639h2M1526 639h2M1283 640h2M1333 640h2M1337 640h2M1344 640h2M1368 640h2M1388 640h2M1402 640h2M1426 640h2M1438 640h2M1439 640h2M1648 640h2M1308 641h2M1312 641h2M1313 641h2M1318 641h2M1320 641h2M1329 641h2M1337 641h2M1356 641h2M1357 641h2M1359 641h2M1386 641h2M1430 641h2M1457 641h2M1302 642h2M1320 642h2M1327 642h2M1329 642h2M1332 642h2M1335 642h2M1342 642h2M1343 642h2M1369 642h2M1431 642h2M1446 642h2M1469 642h2M1576 642h2M1823 642h2M1312 643h2M1325 643h2M1360 643h2M1416 643h2M1417 643h2M1465 643h2M1782 643h2M1305 644h2M1321 644h2M1342 644h2M1364 644h2M1449 644h2M1554 644h2M1673 644h2M1853 644h2M1312 645h2M1315 645h2M1331 645h2M1336 645h2M1351 645h2M1352 645h2M1382 645h2M1386 645h2M1400 645h2M1413 645h2M1437 645h2M1514 645h2M1517 645h2M1302 646h2M1319 646h2M1321 646h2M1323 646h2M1337 646h2M1342 646h2M1348 646h2M1412 646h2M1418 646h2M1456 646h2M1460 646h2M1524 646h2M1537 646h2M1559 646h2M1769 646h2M1314 647h2M1321 647h2M1340 647h2M1468 647h2M1317 648h2M1319 648h2M1328 648h2M1331 648h2M1353 648h2M1404 648h2M1522 648h2M1646 648h2M1287 649h2M1300 649h2M1305 649h2M1308 649h2M1312 649h2M1319 649h2M1327 649h2M1414 649h2M1510 649h2M1514 649h2M1535 649h2M1301 650h2M1304 650h2M1307 650h2M1332 650h2M1338 650h2M1392 650h2M1398 650h2M1460 650h2M1473 650h2M1523 650h2M1292 651h2M1294 651h2M1297 651h2M1301 651h2M1330 651h2M1336 651h2M1372 651h2M1394 651h2M1441 651h2M1455 651h2M1524 651h2M1598 651h2M1292 652h2M1301 652h2M1314 652h2M1321 652h2M1326 652h2M1343 652h2M1397 652h2M1433 652h2M1605 652h2M1289 653h2M1291 653h2M1293 653h2M1296 653h2M1315 653h2M1316 653h2M1317 653h2M1329 653h2M1332 653h2M1352 653h2M1361 653h2M1375 653h2M1440 653h2M1292 654h2M1309 654h2M1319 654h2M1327 654h2M1346 654h2M1349 654h2M1361 654h2M1369 654h2M1410 654h2M1487 654h2M1502 654h2M1574 654h2M1793 654h2M1286 655h2M1294 655h2M1311 655h2M1316 655h2M1317 655h2M1326 655h2M1335 655h2M1337 655h2M1340 655h2M1362 655h2M1410 655h2M1666 655h2M1293 656h2M1297 656h2M1392 656h2M1474 656h2M1536 656h2M1285 657h2M1295 657h2M1299 657h2M1315 657h2M1465 657h2M1502 657h2M1537 657h2M1284 658h2M1317 658h2M1322 658h2M1332 658h2M1375 658h2M1441 658h2M1449 658h2M1492 658h2M1535 658h2M1286 659h2M1307 659h2M1317 659h2M1329 659h2M1336 659h2M1386 659h2M1474 659h2M1475 659h2M1283 660h2M1287 660h2M1296 660h2M1298 660h2M1300 660h2M1304 660h2M1327 660h2M1328 660h2M1354 660h2M1355 660h2M1360 660h2M1372 660h2M1465 660h2M1284 661h2M1304 661h2M1305 661h2M1307 661h2M1344 661h2M1382 661h2M1390 661h2M1447 661h2M1273 662h2M1289 662h2M1292 662h2M1295 662h2M1298 662h2M1299 662h2M1303 662h2M1314 662h2M1352 662h2M1388 662h2M1457 662h2M1280 663h2M1305 663h2M1318 663h2M1319 663h2M1344 663h2M1394 663h2M1484 663h2M1289 664h2M1311 664h2M1322 664h2M1328 664h2M1344 664h2M1349 664h2M1368 664h2M1429 664h2M1446 664h2M1456 664h2M1464 664h2M1467 664h2M1513 664h2M1601 664h2M1280 665h2M1285 665h2M1286 665h2M1289 665h2M1322 665h2M1323 665h2M1346 665h2M1426 665h2M1482 665h2M1266 666h2M1272 666h2M1277 666h2M1282 666h2M1283 666h2M1284 666h2M1285 666h2M1296 666h2M1314 666h2M1325 666h2M1346 666h2M1356 666h2M1400 666h2M1266 667h2M1275 667h2M1297 667h2M1304 667h2M1311 667h2M1314 667h2M1333 667h2M1377 667h2M1439 667h2M1455 667h2M1670 667h2M1876 667h2M1304 668h2M1311 668h2M1368 668h2M1386 668h2M1423 668h2M1271 669h2M1280 669h2M1298 669h2M1299 669h2M1302 669h2M1304 669h2M1314 669h2M1327 669h2M1336 669h2M1345 669h2M1346 669h2M1364 669h2M1507 669h2M1260 670h2M1277 670h2M1303 670h2M1335 670h2M1347 670h2M1362 670h2M1376 670h2M1390 670h2M1244 671h2M1259 671h2M1273 671h2M1274 671h2M1283 671h2M1286 671h2M1296 671h2M1338 671h2M1400 671h2M1421 671h2M1516 671h2M1533 671h2M1563 671h2M1265 672h2M1277 672h2M1285 672h2M1309 672h2M1344 672h2M1356 672h2M1390 672h2M1270 673h2M1277 673h2M1283 673h2M1297 673h2M1302 673h2M1355 673h2M1445 673h2M1617 673h2M1253 674h2M1262 674h2M1265 674h2M1271 674h2M1276 674h2M1277 674h2M1288 674h2M1301 674h2M1321 674h2M1520 674h2M1252 675h2M1256 675h2M1260 675h2M1261 675h2M1265 675h2M1267 675h2M1271 675h2M1280 675h2M1282 675h2M1284 675h2M1301 675h2M1311 675h2M1314 675h2M1346 675h2M1374 675h2M1472 675h2M1497 675h2M1249 676h2M1250 676h2M1260 676h2M1269 676h2M1273 676h2M1331 676h2M1478 676h2M1250 677h2M1251 677h2M1253 677h2M1254 677h2M1260 677h2M1264 677h2M1266 677h2M1294 677h2M1424 677h2M1455 677h2M1505 677h2M1238 678h2M1246 678h2M1249 678h2M1251 678h2M1265 678h2M1273 678h2M1276 678h2M1281 678h2M1323 678h2M1326 678h2M1331 678h2M1339 678h2M1348 678h2M1350 678h2M1505 678h2M1680 678h2M1248 679h2M1256 679h2M1272 679h2M1291 679h2M1308 679h2M1321 679h2M1323 679h2M1326 679h2M1331 679h2M1505 679h2M1245 680h2M1284 680h2M1309 680h2M1315 680h2M1343 680h2M1261 681h2M1269 681h2M1271 681h2M1275 681h2M1280 681h2M1283 681h2M1288 681h2M1306 681h2M1310 681h2M1314 681h2M1354 681h2M1362 681h2M1401 681h2M1415 681h2M1246 682h2M1251 682h2M1278 682h2M1281 682h2M1295 682h2M1302 682h2M1309 682h2M1326 682h2M1353 682h2M1477 682h2M1239 683h2M1243 683h2M1244 683h2M1273 683h2M1307 683h2M1313 683h2M1385 683h2M1468 683h2M1762 683h2M1226 684h2M1231 684h2M1241 684h2M1247 684h2M1260 684h2M1261 684h2M1263 684h2M1266 684h2M1268 684h2M1278 684h2M1288 684h2M1312 684h2M1321 684h2M1466 684h2M1528 684h2M1865 684h2M1252 685h2M1259 685h2M1263 685h2M1269 685h2M1279 685h2M1286 685h2M1291 685h2M1309 685h2M1335 685h2M1339 685h2M1441 685h2M1509 685h2M1234 686h2M1236 686h2M1238 686h2M1242 686h2M1249 686h2M1276 686h2M1285 686h2M1402 686h2M1445 686h2M1227 687h2M1229 687h2M1243 687h2M1244 687h2M1260 687h2M1291 687h2M1293 687h2M1305 687h2M1383 687h2M1226 688h2M1233 688h2M1236 688h2M1241 688h2M1243 688h2M1266 688h2M1272 688h2M1296 688h2M1309 688h2M1315 688h2M1364 688h2M1385 688h2M1438 688h2M1580 688h2M1876 688h2M1210 689h2M1224 689h2M1225 689h2M1252 689h2M1253 689h2M1256 689h2M1264 689h2M1279 689h2M1327 689h2M1361 689h2M1226 690h2M1309 690h2M1316 690h2M1319 690h2M1331 690h2M1428 690h2M1221 691h2M1241 691h2M1245 691h2M1255 691h2M1256 691h2M1272 691h2M1291 691h2M1319 691h2M1347 691h2M1221 692h2M1228 692h2M1249 692h2M1251 692h2M1257 692h2M1260 692h2M1312 692h2M1320 692h2M1323 692h2M1341 692h2M1421 692h2M1477 692h2M1217 693h2M1238 693h2M1241 693h2M1246 693h2M1254 693h2M1261 693h2M1263 693h2M1280 693h2M1282 693h2M1291 693h2M1300 693h2M1302 693h2M1305 693h2M1328 693h2M1213 694h2M1228 694h2M1238 694h2M1261 694h2M1270 694h2M1285 694h2M1286 694h2M1293 694h2M1356 694h2M1394 694h2M1590 694h2M1222 695h2M1223 695h2M1233 695h2M1240 695h2M1243 695h2M1259 695h2M1291 695h2M1301 695h2M1321 695h2M1348 695h2M1351 695h2M1419 695h2M1453 695h2M1475 695h2M1214 696h2M1259 696h2M1265 696h2M1271 696h2M1273 696h2M1287 696h2M1351 696h2M1376 696h2M1381 696h2M1405 696h2M1208 697h2M1210 697h2M1220 697h2M1226 697h2M1234 697h2M1238 697h2M1244 697h2M1245 697h2M1248 697h2M1251 697h2M1253 697h2M1256 697h2M1259 697h2M1263 697h2M1265 697h2M1273 697h2M1278 697h2M1285 697h2M1303 697h2M1352 697h2M1365 697h2M1368 697h2M1371 697h2M1212 698h2M1213 698h2M1214 698h2M1216 698h2M1223 698h2M1230 698h2M1246 698h2M1267 698h2M1268 698h2M1367 698h2M1226 699h2M1235 699h2M1245 699h2M1246 699h2M1265 699h2M1289 699h2M1415 699h2M1208 700h2M1225 700h2M1233 700h2M1235 700h2M1249 700h2M1251 700h2M1281 700h2M1297 700h2M1499 700h2M1207 701h2M1213 701h2M1217 701h2M1223 701h2M1226 701h2M1266 701h2M1299 701h2M1314 701h2M1397 701h2M1570 701h2M1189 702h2M1229 702h2M1237 702h2M1247 702h2M1296 702h2M1334 702h2M1393 702h2M1407 702h2M1804 702h2M1208 703h2M1218 703h2M1232 703h2M1237 703h2M1240 703h2M1243 703h2M1258 703h2M1274 703h2M1276 703h2M1282 703h2M1289 703h2M1205 704h2M1207 704h2M1209 704h2M1220 704h2M1228 704h2M1251 704h2M1257 704h2M1264 704h2M1288 704h2M1294 704h2M1354 704h2M1371 704h2M1563 704h2M1207 705h2M1208 705h2M1212 705h2M1214 705h2M1216 705h2M1219 705h2M1226 705h2M1230 705h2M1246 705h2M1254 705h2M1277 705h2M1319 705h2M1455 705h2M1522 705h2M1592 705h2M1181 706h2M1199 706h2M1201 706h2M1208 706h2M1232 706h2M1238 706h2M1246 706h2M1250 706h2M1257 706h2M1291 706h2M1304 706h2M1366 706h2M1426 706h2M1196 707h2M1199 707h2M1220 707h2M1234 707h2M1246 707h2M1264 707h2M1277 707h2M1191 708h2M1195 708h2M1213 708h2M1218 708h2M1253 708h2M1347 708h2M1350 708h2M1362 708h2M1435 708h2M1463 708h2M1193 709h2M1195 709h2M1204 709h2M1209 709h2M1221 709h2M1222 709h2M1224 709h2M1234 709h2M1265 709h2M1267 709h2M1276 709h2M1189 710h2M1212 710h2M1219 710h2M1234 710h2M1238 710h2M1240 710h2M1247 710h2M1252 710h2M1255 710h2M1262 710h2M1264 710h2M1274 710h2M1279 710h2M1285 710h2M1304 710h2M1324 710h2M1396 710h2M1510 710h2M1823 710h2M1190 711h2M1191 711h2M1199 711h2M1201 711h2M1216 711h2M1218 711h2M1219 711h2M1249 711h2M1272 711h2M1287 711h2M1319 711h2M1503 711h2M1193 712h2M1200 712h2M1209 712h2M1223 712h2M1227 712h2M1232 712h2M1236 712h2M1242 712h2M1250 712h2M1262 712h2M1279 712h2M1335 712h2M1379 712h2M1483 712h2M1182 713h2M1194 713h2M1197 713h2M1202 713h2M1210 713h2M1216 713h2M1241 713h2M1269 713h2M1304 713h2M1365 713h2M1178 714h2M1186 714h2M1199 714h2M1232 714h2M1234 714h2M1242 714h2M1246 714h2M1275 714h2M1277 714h2M1316 714h2M1362 714h2M1529 714h2M1658 714h2M1174 715h2M1185 715h2M1186 715h2M1193 715h2M1199 715h2M1200 715h2M1213 715h2M1220 715h2M1241 715h2M1282 715h2M1420 715h2M1458 715h2M1179 716h2M1180 716h2M1190 716h2M1192 716h2M1193 716h2M1206 716h2M1210 716h2M1218 716h2M1228 716h2M1231 716h2M1239 716h2M1240 716h2M1243 716h2M1313 716h2M1178 717h2M1182 717h2M1187 717h2M1188 717h2M1193 717h2M1195 717h2M1206 717h2M1213 717h2M1221 717h2M1222 717h2M1237 717h2M1252 717h2M1329 717h2M1390 717h2M1408 717h2M1176 718h2M1178 718h2M1239 718h2M1250 718h2M1265 718h2M1307 718h2M1353 718h2M1372 718h2M1428 718h2M1480 718h2M1516 718h2M1778 718h2M1189 719h2M1194 719h2M1200 719h2M1231 719h2M1233 719h2M1241 719h2M1247 719h2M1313 719h2M1363 719h2M1376 719h2M1428 719h2M1433 719h2M1172 720h2M1179 720h2M1188 720h2M1207 720h2M1210 720h2M1229 720h2M1233 720h2M1236 720h2M1272 720h2M1313 720h2M1442 720h2M1580 720h2M1876 720h2M1173 721h2M1190 721h2M1208 721h2M1214 721h2M1215 721h2M1230 721h2M1245 721h2M1279 721h2M1352 721h2M1593 721h2M1167 722h2M1183 722h2M1189 722h2M1195 722h2M1199 722h2M1208 722h2M1209 722h2M1251 722h2M1257 722h2M1165 723h2M1166 723h2M1171 723h2M1172 723h2M1233 723h2M1246 723h2M1376 723h2M1169 724h2M1172 724h2M1196 724h2M1204 724h2M1207 724h2M1209 724h2M1214 724h2M1227 724h2M1331 724h2M1494 724h2M1163 725h2M1165 725h2M1174 725h2M1182 725h2M1185 725h2M1187 725h2M1192 725h2M1199 725h2M1231 725h2M1236 725h2M1242 725h2M1328 725h2M1156 726h2M1160 726h2M1165 726h2M1174 726h2M1176 726h2M1178 726h2M1193 726h2M1204 726h2M1215 726h2M1217 726h2M1287 726h2M1162 727h2M1172 727h2M1202 727h2M1204 727h2M1207 727h2M1208 727h2M1210 727h2M1213 727h2M1253 727h2M1259 727h2M1271 727h2M1341 727h2M1493 727h2M1171 728h2M1172 728h2M1178 728h2M1215 728h2M1219 728h2M1225 728h2M1239 728h2M1256 728h2M1324 728h2M1351 728h2M1361 728h2M1372 728h2M1406 728h2M1148 729h2M1153 729h2M1160 729h2M1166 729h2M1173 729h2M1177 729h2M1181 729h2M1219 729h2M1255 729h2M1291 729h2M1311 729h2M1153 730h2M1168 730h2M1174 730h2M1179 730h2M1185 730h2M1195 730h2M1198 730h2M1199 730h2M1213 730h2M1240 730h2M1276 730h2M1309 730h2M1876 730h2M1150 731h2M1151 731h2M1154 731h2M1156 731h2M1179 731h2M1188 731h2M1191 731h2M1198 731h2M1214 731h2M1254 731h2M1258 731h2M1150 732h2M1157 732h2M1179 732h2M1194 732h2M1209 732h2M1220 732h2M1150 733h2M1152 733h2M1157 733h2M1159 733h2M1167 733h2M1179 733h2M1185 733h2M1194 733h2M1220 733h2M1229 733h2M1230 733h2M1240 733h2M1340 733h2M1149 734h2M1181 734h2M1183 734h2M1193 734h2M1197 734h2M1214 734h2M1222 734h2M1244 734h2M1149 735h2M1157 735h2M1161 735h2M1163 735h2M1170 735h2M1171 735h2M1178 735h2M1189 735h2M1196 735h2M1217 735h2M1222 735h2M1223 735h2M1314 735h2M1451 735h2M1165 736h2M1171 736h2M1200 736h2M1242 736h2M1275 736h2M1379 736h2M1143 737h2M1146 737h2M1149 737h2M1159 737h2M1163 737h2M1179 737h2M1184 737h2M1192 737h2M1324 737h2M1352 737h2M1139 738h2M1143 738h2M1156 738h2M1173 738h2M1343 738h2M1135 739h2M1141 739h2M1143 739h2M1144 739h2M1146 739h2M1155 739h2M1165 739h2M1170 739h2M1184 739h2M1193 739h2M1205 739h2M1239 739h2M1242 739h2M1152 740h2M1162 740h2M1163 740h2M1176 740h2M1321 740h2M1150 741h2M1167 741h2M1179 741h2M1189 741h2M1194 741h2M1203 741h2M1135 742h2M1138 742h2M1167 742h2M1171 742h2M1172 742h2M1181 742h2M1188 742h2M1228 742h2M1256 742h2M1335 742h2M1365 742h2M1378 742h2M1459 742h2M1132 743h2M1138 743h2M1154 743h2M1160 743h2M1163 743h2M1182 743h2M1184 743h2M1220 743h2M1385 743h2M1110 744h2M1128 744h2M1167 744h2M1170 744h2M1176 744h2M1179 744h2M1258 744h2M1129 745h2M1131 745h2M1133 745h2M1137 745h2M1144 745h2M1151 745h2M1154 745h2M1165 745h2M1176 745h2M1311 745h2M1363 745h2M1573 745h2M1126 746h2M1127 746h2M1134 746h2M1161 746h2M1163 746h2M1176 746h2M1197 746h2M1237 746h2M1375 746h2M1386 746h2M1121 747h2M1128 747h2M1129 747h2M1130 747h2M1133 747h2M1135 747h2M1149 747h2M1158 747h2M1214 747h2M1117 748h2M1120 748h2M1164 748h2M1170 748h2M1241 748h2M1287 748h2M1301 748h2M1117 749h2M1119 749h2M1124 749h2M1130 749h2M1140 749h2M1150 749h2M1158 749h2M1198 749h2M1115 750h2M1121 750h2M1128 750h2M1152 750h2M1153 750h2M1158 750h2M1169 750h2M1178 750h2M1188 750h2M1204 750h2M1244 750h2M1286 750h2M1399 750h2M1698 750h2M1139 751h2M1166 751h2M1169 751h2M1180 751h2M1256 751h2M1264 751h2M1268 751h2M1271 751h2M1348 751h2M1114 752h2M1115 752h2M1122 752h2M1134 752h2M1137 752h2M1165 752h2M1166 752h2M1374 752h2M1471 752h2M1111 753h2M1123 753h2M1127 753h2M1143 753h2M1152 753h2M1165 753h2M1166 753h2M1169 753h2M1224 753h2M1281 753h2M1108 754h2M1116 754h2M1120 754h2M1126 754h2M1140 754h2M1152 754h2M1190 754h2M1192 754h2M1218 754h2M1257 754h2M1109 755h2M1117 755h2M1120 755h2M1132 755h2M1144 755h2M1147 755h2M1149 755h2M1154 755h2M1178 755h2M1180 755h2M1201 755h2M1220 755h2M1261 755h2M1266 755h2M1132 756h2M1173 756h2M1187 756h2M1191 756h2M1226 756h2M1252 756h2M1296 756h2M1425 756h2M1823 756h2M1095 757h2M1128 757h2M1142 757h2M1144 757h2M1155 757h2M1217 757h2M1223 757h2M1113 758h2M1121 758h2M1124 758h2M1125 758h2M1127 758h2M1145 758h2M1147 758h2M1153 758h2M1171 758h2M1183 758h2M1243 758h2M1266 758h2M1410 758h2M1103 759h2M1110 759h2M1114 759h2M1137 759h2M1159 759h2M1173 759h2M1222 759h2M1327 759h2M1401 759h2M1082 760h2M1091 760h2M1117 760h2M1125 760h2M1132 760h2M1137 760h2M1196 760h2M1249 760h2M1290 760h2M1099 761h2M1108 761h2M1118 761h2M1140 761h2M1142 761h2M1154 761h2M1174 761h2M1205 761h2M1278 761h2M1111 762h2M1125 762h2M1128 762h2M1137 762h2M1178 762h2M1192 762h2M1208 762h2M1265 762h2M1093 763h2M1099 763h2M1111 763h2M1112 763h2M1121 763h2M1129 763h2M1134 763h2M1201 763h2M1206 763h2M1223 763h2M1323 763h2M1101 764h2M1103 764h2M1121 764h2M1125 764h2M1149 764h2M1156 764h2M1160 764h2M1200 764h2M1384 764h2M1095 765h2M1102 765h2M1103 765h2M1104 765h2M1110 765h2M1139 765h2M1144 765h2M1154 765h2M1167 765h2M1175 765h2M1177 765h2M1184 765h2M1187 765h2M1195 765h2M1238 765h2M1257 765h2M1087 766h2M1097 766h2M1147 766h2M1154 766h2M1157 766h2M1158 766h2M1215 766h2M1223 766h2M1088 767h2M1103 767h2M1112 767h2M1119 767h2M1120 767h2M1123 767h2M1142 767h2M1156 767h2M1160 767h2M1173 767h2M1362 767h2M1088 768h2M1109 768h2M1113 768h2M1114 768h2M1116 768h2M1120 768h2M1142 768h2M1147 768h2M1170 768h2M1218 768h2M1241 768h2M1085 769h2M1092 769h2M1116 769h2M1127 769h2M1134 769h2M1152 769h2M1127 770h2M1128 770h2M1129 770h2M1143 770h2M1258 770h2M1271 770h2M1087 771h2M1089 771h2M1098 771h2M1105 771h2M1126 771h2M1138 771h2M1181 771h2M1185 771h2M1078 772h2M1093 772h2M1097 772h2M1104 772h2M1109 772h2M1114 772h2M1128 772h2M1155 772h2M1224 772h2M1308 772h2M1076 773h2M1078 773h2M1079 773h2M1085 773h2M1108 773h2M1115 773h2M1118 773h2M1121 773h2M1138 773h2M1142 773h2M1148 773h2M1168 773h2M1253 773h2M1265 773h2M1073 774h2M1079 774h2M1084 774h2M1086 774h2M1088 774h2M1129 774h2M1136 774h2M1205 774h2M1358 774h2M1066 775h2M1096 775h2M1098 775h2M1105 775h2M1122 775h2M1181 775h2M1234 775h2M1369 775h2M1077 776h2M1081 776h2M1100 776h2M1102 776h2M1105 776h2M1117 776h2M1119 776h2M1132 776h2M1141 776h2M1200 776h2M1068 777h2M1088 777h2M1093 777h2M1096 777h2M1194 777h2M1226 777h2M1250 777h2M1260 777h2M1083 778h2M1086 778h2M1088 778h2M1101 778h2M1105 778h2M1112 778h2M1173 778h2M1069 779h2M1101 779h2M1102 779h2M1111 779h2M1138 779h2M1139 779h2M1060 780h2M1070 780h2M1081 780h2M1099 780h2M1117 780h2M1267 780h2M1346 780h2M1084 781h2M1086 781h2M1090 781h2M1099 781h2M1113 781h2M1119 781h2M1196 781h2M1200 781h2M1062 782h2M1068 782h2M1117 782h2M1139 782h2M1226 782h2M1236 782h2M1057 783h2M1060 783h2M1063 783h2M1066 783h2M1068 783h2M1089 783h2M1183 783h2M1221 783h2M1086 784h2M1103 784h2M1112 784h2M1119 784h2M1125 784h2M1305 784h2M1061 785h2M1075 785h2M1085 785h2M1096 785h2M1110 785h2M1114 785h2M1257 785h2M1307 785h2M1052 786h2M1055 786h2M1056 786h2M1060 786h2M1061 786h2M1063 786h2M1082 786h2M1135 786h2M1159 786h2M1183 786h2M1271 786h2M1046 787h2M1065 787h2M1066 787h2M1076 787h2M1082 787h2M1090 787h2M1109 787h2M1116 787h2M1126 787h2M1162 787h2M1193 787h2M1197 787h2M1052 788h2M1060 788h2M1090 788h2M1133 788h2M1136 788h2M1065 789h2M1082 789h2M1085 789h2M1088 789h2M1114 789h2M1135 789h2M1075 790h2M1082 790h2M1083 790h2M1109 790h2M1122 790h2M1180 790h2M1045 791h2M1059 791h2M1084 791h2M1041 792h2M1043 792h2M1044 792h2M1075 792h2M1101 792h2M1135 792h2M1179 792h2M1183 792h2M1198 792h2M1231 792h2M1876 792h2M1054 793h2M1055 793h2M1068 793h2M1071 793h2M1083 793h2M1086 793h2M1089 793h2M1105 793h2M1109 793h2M1154 793h2M1043 794h2M1092 794h2M1098 794h2M1100 794h2M1162 794h2M1227 794h2M1320 794h2M1632 794h2M1034 795h2M1038 795h2M1042 795h2M1056 795h2M1065 795h2M1080 795h2M1093 795h2M1095 795h2M1180 795h2M1037 796h2M1038 796h2M1047 796h2M1058 796h2M1072 796h2M1093 796h2M1096 796h2M1103 796h2M1164 796h2M1167 796h2M1179 796h2M1251 796h2M1033 797h2M1039 797h2M1053 797h2M1062 797h2M1064 797h2M1116 797h2M1022 798h2M1038 798h2M1053 798h2M1058 798h2M1071 798h2M1079 798h2M1082 798h2M1100 798h2M1102 798h2M1103 798h2M1149 798h2M1244 798h2M1061 799h2M1064 799h2M1066 799h2M1070 799h2M1081 799h2M1083 799h2M1089 799h2M1092 799h2M1121 799h2M1125 799h2M1130 799h2M1219 799h2M1028 800h2M1030 800h2M1033 800h2M1043 800h2M1046 800h2M1056 800h2M1057 800h2M1083 800h2M1065 801h2M1072 801h2M1080 801h2M1200 801h2M1210 801h2M1014 802h2M1048 802h2M1058 802h2M1069 802h2M1071 802h2M1078 802h2M1082 802h2M1114 802h2M1181 802h2M1023 803h2M1029 803h2M1042 803h2M1051 803h2M1064 803h2M1066 803h2M1057 804h2M1069 804h2M1094 804h2M1106 804h2M1183 804h2M1258 804h2M1279 804h2M1040 805h2M1048 805h2M1073 805h2M1074 805h2M1101 805h2M1179 805h2M1024 806h2M1040 806h2M1044 806h2M1068 806h2M1080 806h2M1158 806h2M1182 806h2M1185 806h2M1037 807h2M1041 807h2M1133 807h2M1015 808h2M1040 808h2M1050 808h2M1060 808h2M1077 808h2M1081 808h2M1086 808h2M1101 808h2M1109 808h2M1033 809h2M1060 809h2M1099 809h2M1129 809h2M1136 809h2M1013 810h2M1060 810h2M1075 810h2M1089 810h2M1194 810h2M1064 811h2M1187 811h2M1211 811h2M1003 812h2M1005 812h2M1022 812h2M1026 812h2M1051 812h2M1073 812h2M1078 812h2M1090 812h2M1094 812h2M1119 812h2M1013 813h2M1036 813h2M1047 813h2M1068 813h2M1116 813h2M999 814h2M1003 814h2M1023 814h2M1029 814h2M1053 814h2M1060 814h2M1100 814h2M1138 814h2M1147 814h2M1234 814h2M997 815h2M1002 815h2M1005 815h2M1031 815h2M1035 815h2M1039 815h2M1044 815h2M1056 815h2M1060 815h2M1145 815h2M1152 815h2M999 816h2M1009 816h2M1028 816h2M1032 816h2M1035 816h2M1056 816h2M1098 816h2M1102 816h2M1041 817h2M1069 817h2M1104 817h2M1152 817h2M1025 818h2M1030 818h2M1038 818h2M1041 818h2M1058 818h2M1077 818h2M1087 818h2M1135 818h2M1146 818h2M1023 819h2M1024 819h2M1047 819h2M1113 819h2M1215 819h2M992 820h2M1035 820h2M1052 820h2M1068 820h2M1083 820h2M1093 820h2M1102 820h2M1312 820h2M991 821h2M993 821h2M1011 821h2M1012 821h2M1019 821h2M1035 821h2M1057 821h2M1086 821h2M1151 821h2M1172 821h2M1085 822h2M1223 822h2M1011 823h2M1019 823h2M1033 823h2M1050 823h2M1155 823h2M1019 824h2M1023 824h2M1024 824h2M1029 824h2M1033 824h2M1054 824h2M1074 824h2M1104 824h2M1169 824h2M983 825h2M1016 825h2M1031 825h2M1039 825h2M1042 825h2M1065 825h2M1077 825h2M1148 825h2M981 826h2M1004 826h2M1026 826h2M1030 826h2M1039 826h2M1054 826h2M1079 826h2M1084 826h2M1104 826h2M978 827h2M1008 827h2M1020 828h2M1046 828h2M1062 828h2M1101 828h2M1149 828h2M974 829h2M1013 829h2M1022 829h2M1075 829h2M1088 829h2M1120 829h2M975 830h2M993 830h2M1010 830h2M1015 830h2M1026 830h2M1029 830h2M1033 830h2M1045 830h2M1050 830h2M1063 830h2M1071 830h2M1089 830h2M1096 830h2M1163 830h2M1017 831h2M1029 831h2M1030 831h2M1037 831h2M1047 831h2M1102 831h2M1148 831h2M972 832h2M993 832h2M1015 832h2M1038 832h2M1090 832h2M1159 832h2M970 833h2M981 833h2M993 833h2M1106 833h2M995 834h2M1022 834h2M1040 834h2M990 835h2M1030 835h2M958 836h2M1008 836h2M1013 836h2M1042 836h2M1044 836h2M1062 836h2M1082 836h2M993 837h2M998 837h2M1000 837h2M1012 837h2M1023 837h2M1033 837h2M1047 837h2M1060 837h2M1215 837h2M984 838h2M998 838h2M1003 838h2M1012 838h2M1017 838h2M957 839h2M1028 839h2M1044 839h2M995 840h2M1030 840h2M1015 841h2M1021 841h2M1027 841h2M1032 841h2M1063 841h2M1081 841h2M1105 841h2M1107 841h2M979 842h2M996 842h2M1002 842h2M1042 842h2M1048 842h2M1049 842h2M972 843h2M1046 843h2M1062 843h2M1102 843h2M1176 843h2M970 844h2M990 844h2M993 844h2M1001 844h2M1023 844h2M983 845h2M994 845h2M997 845h2M1005 845h2M1010 845h2M1025 845h2M1029 845h2M1144 845h2M950 846h2M984 846h2M1017 846h2M1110 846h2M976 847h2M992 847h2M1050 847h2M1086 847h2M999 848h2M1003 848h2M1004 848h2M1085 848h2M1103 848h2M979 849h2M987 849h2M990 849h2M1011 849h2M1031 849h2M1058 849h2M1111 849h2M969 850h2M1005 850h2M1012 850h2M1013 850h2M1018 850h2M1048 850h2M1055 850h2M1057 850h2M934 851h2M963 851h2M971 851h2M980 851h2M1030 851h2M1081 851h2M934 852h2M980 852h2M983 852h2M1017 852h2M1025 852h2M1077 852h2M1095 852h2M968 853h2M981 853h2M994 853h2M1006 853h2M973 854h2M976 854h2M985 854h2M997 854h2M1003 854h2M1047 854h2M966 855h2M983 855h2M996 855h2M1000 855h2M1019 855h2M1091 855h2M960 856h2M961 856h2M977 856h2M998 856h2M1035 856h2M1096 856h2M1160 856h2M948 857h2M968 857h2M992 857h2M1020 857h2M1053 857h2M1075 857h2M957 858h2M990 858h2M998 858h2M1015 858h2M1048 858h2M1064 858h2M959 859h2M972 859h2M985 859h2M1000 859h2M1018 859h2M1043 859h2M972 860h2M991 860h2M1003 860h2M1012 860h2M1040 860h2M962 861h2M967 861h2M983 861h2M1002 861h2M1010 861h2M1036 861h2M958 862h2M971 862h2M980 862h2M987 862h2M1027 862h2M1076 862h2M984 863h2M1014 863h2M1032 863h2M1040 863h2M973 864h2M1053 864h2M946 865h2M951 865h2M947 866h2M964 866h2M968 866h2M982 866h2M989 866h2M991 866h2M1036 866h2M957 867h2M960 867h2M965 867h2M970 869h2M978 869h2M989 869h2M991 869h2M1005 869h2M1021 869h2M939 870h2M950 870h2M956 870h2M965 870h2M969 870h2M976 870h2M1021 870h2M921 871h2M944 871h2M960 871h2M976 871h2M1014 871h2M1039 871h2M953 872h2M1011 872h2M935 873h2M941 873h2M945 873h2M975 873h2M1016 873h2M1018 873h2M1021 873h2M1023 873h2M941 874h2M945 874h2M999 874h2M942 875h2M947 875h2M949 875h2M955 875h2M959 875h2M960 875h2M974 875h2M989 875h2M1006 875h2M934 876h2M947 876h2M953 876h2M962 876h2M964 876h2M966 876h2M993 876h2M1000 876h2M1022 876h2M939 877h2M946 877h2M949 877h2M1032 877h2M916 878h2M929 878h2M941 878h2M965 878h2M992 878h2M929 879h2M931 879h2M935 879h2M948 879h2M957 879h2M989 879h2M922 880h2M948 880h2M956 880h2M962 880h2M985 880h2M986 880h2M932 881h2M939 881h2M951 881h2M954 881h2M919 883h2M942 883h2M955 883h2M958 883h2M904 884h2M907 884h2M931 884h2M937 884h2M921 885h2M931 885h2M958 885h2M992 885h2M921 886h2M949 886h2M961 886h2M992 886h2M1015 886h2M938 887h2M949 887h2M953 887h2M963 887h2M993 887h2M935 888h2M948 889h2M951 889h2M957 889h2M906 890h2M927 890h2M954 890h2M959 890h2M960 890h2M912 891h2M917 891h2M923 891h2M981 891h2M907 892h2M914 892h2M920 892h2M928 892h2M945 892h2M984 892h2M912 893h2M915 893h2M925 893h2M931 893h2M904 894h2M905 894h2M909 894h2M911 894h2M926 894h2M927 894h2M894 895h2M904 895h2M938 895h2M956 895h2M901 896h2M904 896h2M909 896h2M912 896h2M913 896h2M926 896h2M930 896h2M904 897h2M913 897h2M914 897h2M948 897h2M905 898h2M912 898h2M915 899h2M929 899h2M933 899h2M947 899h2M953 899h2M905 900h2M908 900h2M941 900h2M882 901h2M889 901h2M913 901h2M920 901h2M929 901h2M884 902h2M906 902h2M920 902h2M980 902h2M898 903h2M903 903h2M917 903h2M884 904h2M896 904h2M897 904h2M917 904h2M935 904h2M949 904h2M877 905h2M918 906h2M878 907h2M890 907h2M906 907h2M917 907h2M882 908h2M891 908h2M901 908h2M888 909h2M893 909h2M899 909h2M927 909h2M895 910h2M896 910h2M899 910h2M922 910h2M887 911h2M889 911h2M897 911h2M900 911h2M884 912h2M894 912h2M898 912h2M900 912h2M865 913h2M870 913h2M885 913h2M886 913h2M889 913h2M896 913h2M872 914h2M875 914h2M884 915h2M885 915h2M887 915h2M858 916h2M883 916h2M911 916h2M878 917h2M894 917h2M872 918h2M856 919h2M858 919h2M859 919h2M870 919h2M878 919h2" stroke="#0000e6" stroke-width="2"/><path d="M1482 591h2M1329 635h2M1326 639h2M1340 639h2M1331 644h2M1323 645h2M1312 647h2M1315 648h2M1334 649h2M1305 650h2M1295 651h2M1308 652h2M1303 653h2M1305 654h2M1298 655h2M1302 656h2M1307 656h2M1308 656h2M1325 659h2M1275 663h2M1287 663h2M1321 663h2M1269 664h2M1282 664h2M1301 664h2M1289 666h2M1299 666h2M1282 668h2M1287 668h2M1275 670h2M1278 670h2M1271 672h2M1271 673h2M1280 674h2M1287 675h2M1258 676h2M1256 678h2M1266 678h2M1249 679h2M1250 679h2M1259 679h2M1267 680h2M1273 680h2M1281 680h2M1243 681h2M1253 681h2M1257 681h2M1241 682h2M1247 682h2M1250 682h2M1254 682h2M1274 682h2M1262 683h2M1239 684h2M1242 684h2M1250 684h2M1270 684h2M1246 685h2M1257 686h2M1252 687h2M1238 688h2M1242 688h2M1258 688h2M1263 688h2M1274 688h2M1231 689h2M1242 689h2M1259 689h2M1276 689h2M1243 690h2M1264 690h2M1277 690h2M1226 691h2M1268 691h2M1255 692h2M1240 693h2M1243 693h2M1231 695h2M1262 695h2M1226 696h2M1229 696h2M1231 696h2M1232 696h2M1219 697h2M1241 697h2M1300 698h2M1237 699h2M1215 700h2M1226 700h2M1214 701h2M1215 701h2M1219 701h2M1249 701h2M1210 702h2M1209 703h2M1229 703h2M1213 706h2M1218 706h2M1226 706h2M1219 707h2M1191 709h2M1220 709h2M1198 710h2M1203 710h2M1198 711h2M1244 711h2M1192 712h2M1195 712h2M1203 712h2M1207 712h2M1193 713h2M1196 713h2M1203 713h2M1205 713h2M1254 713h2M1194 714h2M1206 714h2M1228 715h2M1198 717h2M1223 717h2M1191 718h2M1195 718h2M1198 718h2M1202 718h2M1222 718h2M1181 719h2M1193 719h2M1181 720h2M1183 720h2M1196 720h2M1180 721h2M1186 721h2M1203 721h2M1212 722h2M1187 723h2M1185 724h2M1200 724h2M1162 725h2M1179 725h2M1180 725h2M1204 725h2M1194 726h2M1201 726h2M1178 727h2M1187 727h2M1169 729h2M1158 730h2M1164 730h2M1183 730h2M1190 730h2M1155 731h2M1190 731h2M1187 732h2M1188 732h2M1151 733h2M1163 733h2M1190 733h2M1146 734h2M1153 734h2M1158 734h2M1179 734h2M1146 735h2M1182 735h2M1157 736h2M1179 736h2M1140 737h2M1141 737h2M1174 737h2M1181 737h2M1190 737h2M1148 738h2M1150 738h2M1165 738h2M1182 738h2M1142 739h2M1138 740h2M1140 740h2M1143 740h2M1184 740h2M1142 742h2M1133 744h2M1138 744h2M1148 744h2M1154 744h2M1128 745h2M1135 745h2M1142 745h2M1145 745h2M1149 745h2M1155 745h2M1163 745h2M1179 745h2M1144 746h2M1146 746h2M1159 746h2M1139 747h2M1140 747h2M1142 747h2M1147 747h2M1118 748h2M1131 748h2M1135 748h2M1144 748h2M1123 749h2M1128 749h2M1137 749h2M1138 749h2M1141 749h2M1145 749h2M1146 749h2M1162 749h2M1129 750h2M1134 750h2M1149 750h2M1125 752h2M1131 752h2M1161 752h2M1119 753h2M1128 753h2M1153 753h2M1156 753h2M1119 754h2M1129 754h2M1130 754h2M1155 754h2M1110 755h2M1124 755h2M1127 755h2M1128 755h2M1112 756h2M1113 756h2M1123 756h2M1125 756h2M1122 757h2M1148 757h2M1104 758h2M1106 758h2M1111 758h2M1112 758h2M1123 758h2M1129 758h2M1132 758h2M1135 758h2M1107 759h2M1108 759h2M1121 759h2M1139 759h2M1104 760h2M1106 760h2M1111 760h2M1103 761h2M1109 761h2M1111 761h2M1117 761h2M1119 761h2M1122 761h2M1097 762h2M1105 762h2M1127 762h2M1132 762h2M1100 763h2M1104 763h2M1120 763h2M1122 763h2M1094 764h2M1110 764h2M1118 764h2M1123 764h2M1095 766h2M1101 766h2M1105 766h2M1106 766h2M1156 766h2M1091 767h2M1098 767h2M1100 767h2M1108 767h2M1118 767h2M1092 768h2M1103 768h2M1133 768h2M1088 769h2M1093 769h2M1100 769h2M1109 769h2M1078 770h2M1082 770h2M1086 770h2M1087 770h2M1089 770h2M1091 770h2M1094 770h2M1104 770h2M1077 771h2M1082 771h2M1099 771h2M1106 771h2M1108 772h2M1118 772h2M1083 773h2M1087 773h2M1092 773h2M1116 773h2M1081 774h2M1089 774h2M1098 774h2M1122 774h2M1067 775h2M1074 775h2M1077 775h2M1083 775h2M1087 775h2M1103 775h2M1109 775h2M1070 776h2M1071 776h2M1089 776h2M1104 776h2M1079 777h2M1089 777h2M1090 777h2M1103 777h2M1071 778h2M1076 778h2M1108 778h2M1070 779h2M1074 779h2M1077 779h2M1079 779h2M1083 779h2M1091 779h2M1064 780h2M1066 780h2M1073 780h2M1078 780h2M1079 780h2M1083 780h2M1088 780h2M1094 780h2M1096 780h2M1066 781h2M1067 781h2M1078 781h2M1080 781h2M1069 782h2M1058 783h2M1078 783h2M1084 783h2M1090 783h2M1054 784h2M1064 784h2M1065 784h2M1089 784h2M1069 785h2M1072 785h2M1088 785h2M1054 786h2M1062 786h2M1073 786h2M1076 786h2M1078 786h2M1081 786h2M1048 787h2M1058 787h2M1062 787h2M1063 787h2M1070 787h2M1053 788h2M1058 788h2M1061 788h2M1077 788h2M1081 788h2M1053 789h2M1055 789h2M1077 789h2M1048 790h2M1049 790h2M1058 790h2M1059 790h2M1067 790h2M1049 791h2M1051 791h2M1055 791h2M1078 791h2M1048 792h2M1070 792h2M1074 792h2M1043 793h2M1046 794h2M1058 794h2M1063 794h2M1064 794h2M1039 795h2M1047 795h2M1053 795h2M1072 795h2M1035 796h2M1039 796h2M1045 796h2M1052 796h2M1066 796h2M1074 796h2M1035 797h2M1036 797h2M1037 797h2M1045 797h2M1047 797h2M1050 797h2M1030 798h2M1036 798h2M1065 798h2M1066 798h2M1075 798h2M1030 799h2M1031 799h2M1042 799h2M1058 799h2M1063 799h2M1027 800h2M1029 800h2M1059 800h2M1065 800h2M1039 801h2M1028 802h2M1031 802h2M1037 802h2M1039 802h2M1042 802h2M1044 802h2M1056 802h2M1057 802h2M1031 803h2M1057 803h2M1060 803h2M1022 804h2M1043 804h2M1061 804h2M1018 805h2M1028 805h2M1036 805h2M1021 806h2M1026 806h2M1029 806h2M1045 806h2M1007 807h2M1031 807h2M1033 807h2M1034 807h2M1040 807h2M1042 807h2M1047 807h2M1009 808h2M1012 808h2M1018 808h2M1022 808h2M1026 808h2M1033 808h2M1039 808h2M1047 808h2M1057 808h2M1012 809h2M1013 809h2M1037 809h2M1050 809h2M1014 810h2M1034 810h2M1038 810h2M1042 810h2M1029 811h2M1044 811h2M1013 812h2M1017 812h2M1019 812h2M1020 813h2M1025 813h2M1030 813h2M1033 813h2M1015 814h2M1034 814h2M1036 814h2M1000 815h2M1032 815h2M998 816h2M1013 816h2M1014 816h2M1050 816h2M997 817h2M998 817h2M1010 817h2M1029 817h2M1013 818h2M1011 819h2M1014 819h2M1017 819h2M1036 819h2M990 820h2M995 820h2M1001 820h2M1013 820h2M1020 820h2M1024 820h2M995 821h2M998 821h2M1023 821h2M987 822h2M991 822h2M999 822h2M1024 822h2M988 823h2M991 823h2M1003 823h2M1007 823h2M1029 823h2M986 824h2M990 824h2M1006 824h2M1014 824h2M1015 824h2M1018 824h2M988 825h2M995 825h2M1004 825h2M1014 825h2M1023 825h2M1000 826h2M1005 826h2M1014 826h2M997 827h2M1003 827h2M1009 827h2M1015 827h2M1018 827h2M982 828h2M983 828h2M997 828h2M1000 828h2M993 829h2M1010 829h2M1011 830h2M981 831h2M1007 831h2M1009 831h2M975 832h2M980 832h2M987 832h2M1000 832h2M1001 832h2M1004 832h2M1006 832h2M1021 832h2M1012 833h2M963 834h2M973 834h2M980 834h2M990 834h2M994 834h2M961 835h2M966 835h2M972 835h2M983 835h2M992 835h2M994 835h2M962 836h2M963 836h2M969 836h2M971 836h2M972 836h2M974 836h2M977 836h2M983 836h2M1001 836h2M1019 836h2M958 837h2M966 837h2M967 837h2M992 837h2M995 837h2M958 838h2M962 838h2M983 838h2M993 838h2M997 838h2M1000 838h2M975 839h2M984 839h2M988 839h2M993 839h2M948 840h2M955 840h2M958 840h2M967 840h2M975 841h2M978 841h2M982 841h2M994 841h2M950 842h2M973 842h2M981 842h2M985 842h2M990 842h2M956 843h2M949 844h2M964 844h2M950 845h2M963 845h2M993 845h2M965 846h2M1001 847h2M941 848h2M948 848h2M952 848h2M958 848h2M966 848h2M968 849h2M933 850h2M968 850h2M971 850h2M938 851h2M947 851h2M949 851h2M955 851h2M962 851h2M936 852h2M970 852h2M931 853h2M958 853h2M961 853h2M967 853h2M970 853h2M943 854h2M950 854h2M954 854h2M957 854h2M967 854h2M972 854h2M963 855h2M959 856h2M962 856h2M973 856h2M929 857h2M967 857h2M925 859h2M940 859h2M948 859h2M952 859h2M953 859h2M956 859h2M942 860h2M970 860h2M945 861h2M950 861h2M915 862h2M917 862h2M950 862h2M928 863h2M945 863h2M990 863h2M913 864h2M918 864h2M948 864h2M950 864h2M966 864h2M936 865h2M938 865h2M940 865h2M976 865h2M911 866h2M939 867h2M911 868h2M972 868h2M952 870h2M953 870h2M931 871h2M932 871h2M940 871h2M959 871h2M892 874h2M920 874h2M906 875h2M922 875h2M930 875h2M912 876h2M916 877h2M923 877h2M912 878h2M928 878h2M913 881h2M918 881h2M924 881h2M987 881h2M930 882h2M912 883h2M914 883h2M917 883h2M922 883h2M926 883h2M930 883h2M932 883h2M896 884h2M923 884h2M897 886h2M909 886h2M917 886h2M927 887h2M908 888h2M930 888h2M897 889h2M899 889h2M905 889h2M929 890h2M902 892h2M911 893h2M896 894h2M896 895h2M907 895h2M910 895h2M911 895h2M912 895h2M882 896h2M888 896h2M899 896h2M900 896h2M902 896h2M895 897h2M901 897h2M907 897h2M889 898h2M893 899h2M899 899h2M905 899h2M881 900h2M899 900h2M913 900h2M899 901h2M883 902h2M881 903h2M887 903h2M892 903h2M897 903h2M920 903h2M884 905h2M886 906h2M895 906h2M900 906h2M880 909h2M883 909h2M894 909h2M867 910h2M877 910h2M883 910h2M885 910h2M874 911h2M878 911h2M871 912h2M873 912h2M878 912h2M858 913h2M864 913h2M874 913h2M861 914h2M864 914h2M865 914h2M870 914h2M871 914h2M869 915h2M865 916h2M879 917h2M871 918h2M848 919h2M861 919h2" stroke="#00e5ff" stroke-width="2"/><path d="M1323 638h2M1321 639h2M1325 641h2M1321 645h2M1313 646h2M1328 647h2M1331 647h2M1308 651h2M1324 652h2M1318 653h2M1295 658h2M1267 676h2M1246 679h2M1252 679h2M1255 681h2M1263 681h2M1242 683h2M1246 687h2M1252 690h2M1234 691h2M1225 692h2M1252 692h2M1276 692h2M1250 693h2M1253 693h2M1261 695h2M1244 696h2M1246 696h2M1221 697h2M1218 699h2M1219 699h2M1223 699h2M1230 700h2M1232 700h2M1229 701h2M1244 701h2M1217 706h2M1219 706h2M1235 706h2M1208 708h2M1217 708h2M1184 713h2M1223 715h2M1196 716h2M1194 717h2M1193 720h2M1197 720h2M1211 722h2M1196 726h2M1161 727h2M1158 728h2M1179 729h2M1152 731h2M1168 731h2M1178 731h2M1147 734h2M1188 735h2M1150 736h2M1180 736h2M1151 737h2M1144 738h2M1151 739h2M1164 739h2M1137 740h2M1137 741h2M1147 741h2M1148 741h2M1148 742h2M1150 742h2M1169 742h2M1140 743h2M1161 743h2M1141 744h2M1152 744h2M1159 744h2M1143 745h2M1125 746h2M1128 746h2M1158 746h2M1144 747h2M1152 747h2M1157 747h2M1122 748h2M1136 749h2M1149 749h2M1152 749h2M1126 750h2M1121 751h2M1155 752h2M1126 753h2M1136 753h2M1114 754h2M1115 755h2M1121 755h2M1153 755h2M1126 756h2M1130 756h2M1116 758h2M1117 758h2M1131 758h2M1114 760h2M1101 761h2M1127 761h2M1135 761h2M1134 762h2M1131 763h2M1096 764h2M1126 764h2M1099 765h2M1109 766h2M1116 766h2M1094 767h2M1104 767h2M1089 769h2M1090 770h2M1092 770h2M1100 770h2M1086 771h2M1100 771h2M1113 772h2M1099 773h2M1103 773h2M1090 774h2M1105 774h2M1078 775h2M1080 775h2M1102 775h2M1072 776h2M1074 776h2M1087 777h2M1073 778h2M1075 778h2M1065 779h2M1067 779h2M1072 779h2M1075 779h2M1076 779h2M1098 779h2M1074 781h2M1079 781h2M1063 782h2M1070 783h2M1071 783h2M1060 784h2M1083 784h2M1060 785h2M1068 785h2M1070 785h2M1071 785h2M1093 785h2M1066 786h2M1071 786h2M1084 786h2M1090 786h2M1050 787h2M1052 787h2M1054 787h2M1055 787h2M1067 787h2M1072 787h2M1073 787h2M1050 788h2M1055 788h2M1069 788h2M1051 789h2M1060 789h2M1068 789h2M1073 789h2M1078 789h2M1045 790h2M1053 791h2M1054 791h2M1046 792h2M1054 792h2M1057 792h2M1063 792h2M1064 792h2M1079 792h2M1057 793h2M1065 793h2M1051 794h2M1071 794h2M1073 794h2M1044 795h2M1067 795h2M1071 795h2M1042 796h2M1069 796h2M1057 797h2M1078 797h2M1041 798h2M1049 798h2M1059 798h2M1063 798h2M1040 799h2M1041 799h2M1032 800h2M1055 800h2M1027 801h2M1031 801h2M1034 801h2M1036 801h2M1037 801h2M1055 801h2M1056 801h2M1024 802h2M1029 802h2M1043 802h2M1024 803h2M1028 803h2M1030 803h2M1033 803h2M1036 803h2M1040 803h2M1041 803h2M1024 804h2M1032 804h2M1035 804h2M1046 804h2M1052 804h2M1026 805h2M1025 806h2M1041 806h2M1053 806h2M1016 807h2M1018 807h2M1028 807h2M1020 808h2M1029 808h2M1009 809h2M1014 809h2M1016 809h2M1021 809h2M1022 809h2M1030 809h2M1031 809h2M1036 809h2M1045 809h2M1046 809h2M1012 810h2M1017 810h2M1028 810h2M1014 811h2M1022 811h2M1030 811h2M1006 812h2M1021 812h2M1023 812h2M1027 812h2M1003 813h2M1010 813h2M1012 813h2M1016 813h2M1022 813h2M1024 813h2M1006 814h2M1008 814h2M1010 814h2M1011 814h2M1012 814h2M1026 814h2M1047 814h2M1010 815h2M1016 815h2M1021 815h2M997 816h2M1000 816h2M1001 816h2M1005 816h2M1016 816h2M1025 816h2M1000 817h2M1001 817h2M1002 817h2M1006 817h2M997 818h2M1004 818h2M1016 818h2M1024 818h2M1031 818h2M999 819h2M1002 819h2M1008 819h2M1015 819h2M1022 819h2M1026 819h2M991 820h2M993 820h2M1006 820h2M1008 820h2M1018 820h2M1008 821h2M1013 821h2M1014 821h2M995 822h2M1002 822h2M1005 822h2M1006 822h2M1022 822h2M1023 822h2M1027 822h2M998 823h2M1012 823h2M991 824h2M993 824h2M998 824h2M1001 824h2M1008 824h2M1013 824h2M985 825h2M994 825h2M996 825h2M997 825h2M1005 825h2M1018 825h2M984 826h2M988 826h2M989 826h2M992 826h2M994 826h2M995 826h2M998 826h2M973 827h2M983 827h2M991 827h2M1000 827h2M1012 827h2M1016 827h2M979 828h2M981 828h2M992 828h2M993 828h2M1007 828h2M976 829h2M980 829h2M991 829h2M998 829h2M1011 829h2M1015 829h2M973 830h2M976 830h2M980 830h2M1002 830h2M1004 830h2M976 831h2M983 831h2M988 831h2M989 831h2M995 831h2M1008 831h2M971 832h2M973 832h2M978 832h2M979 832h2M981 832h2M984 832h2M973 833h2M974 833h2M977 833h2M983 833h2M1000 833h2M967 834h2M972 834h2M977 834h2M978 834h2M985 834h2M991 834h2M960 835h2M965 835h2M979 835h2M980 835h2M988 835h2M996 835h2M1004 835h2M967 836h2M980 836h2M981 836h2M988 836h2M960 837h2M964 837h2M965 837h2M970 837h2M957 838h2M964 838h2M981 838h2M988 838h2M958 839h2M959 839h2M961 839h2M973 839h2M977 839h2M978 839h2M979 839h2M989 839h2M1010 839h2M954 840h2M960 840h2M961 840h2M968 840h2M972 840h2M956 841h2M961 841h2M974 841h2M976 841h2M987 841h2M948 842h2M957 842h2M958 842h2M959 842h2M960 842h2M957 843h2M960 843h2M964 843h2M969 843h2M975 843h2M977 843h2M979 843h2M948 844h2M955 844h2M959 844h2M947 845h2M951 845h2M952 845h2M954 845h2M955 845h2M956 845h2M961 845h2M962 845h2M967 845h2M974 845h2M975 845h2M982 845h2M945 846h2M948 846h2M963 846h2M971 846h2M942 847h2M944 847h2M952 847h2M954 847h2M960 847h2M961 847h2M965 847h2M945 848h2M953 848h2M956 848h2M967 848h2M971 848h2M972 848h2M975 848h2M938 849h2M941 849h2M943 849h2M944 849h2M947 849h2M962 849h2M964 849h2M967 849h2M938 850h2M951 850h2M956 850h2M960 850h2M967 850h2M935 851h2M943 851h2M945 851h2M958 851h2M968 851h2M933 852h2M940 852h2M942 852h2M945 852h2M946 852h2M956 852h2M958 852h2M938 853h2M942 853h2M950 853h2M955 853h2M972 853h2M979 853h2M939 854h2M953 854h2M958 854h2M971 854h2M939 855h2M945 855h2M949 855h2M961 855h2M925 856h2M939 856h2M942 856h2M949 856h2M954 856h2M964 856h2M931 857h2M933 857h2M934 857h2M959 857h2M921 858h2M924 858h2M936 858h2M937 858h2M938 858h2M939 858h2M942 858h2M944 858h2M951 858h2M954 858h2M956 858h2M936 859h2M960 859h2M928 860h2M930 860h2M946 860h2M952 860h2M959 860h2M926 861h2M951 861h2M961 861h2M922 862h2M928 862h2M936 862h2M947 862h2M923 863h2M951 863h2M914 864h2M919 864h2M922 864h2M936 864h2M937 864h2M939 864h2M921 865h2M947 865h2M907 867h2M911 867h2M917 867h2M932 867h2M903 868h2M908 868h2M908 869h2M912 869h2M928 869h2M933 869h2M937 869h2M903 870h2M905 870h2M906 870h2M920 870h2M918 871h2M920 871h2M922 871h2M923 871h2M934 871h2M917 872h2M921 872h2M932 872h2M898 873h2M909 873h2M914 873h2M925 873h2M893 874h2M899 874h2M912 874h2M928 874h2M888 875h2M890 875h2M895 875h2M921 875h2M929 875h2M933 875h2M895 876h2M907 876h2M925 876h2M933 876h2M902 877h2M920 877h2M885 878h2M897 878h2M903 878h2M913 878h2M918 878h2M878 881h2M881 881h2M905 881h2M909 881h2M910 881h2M908 882h2M889 883h2M905 883h2M908 883h2M911 884h2M901 885h2M914 885h2M888 886h2M908 886h2M899 887h2M891 888h2M889 889h2M903 889h2M895 890h2M900 890h2M900 891h2M894 892h2M897 892h2M906 893h2M898 894h2M899 894h2M882 895h2M885 895h2M891 895h2M898 895h2M917 895h2M880 896h2M881 896h2M883 896h2M881 897h2M894 897h2M896 897h2M883 898h2M892 898h2M899 898h2M900 898h2M892 899h2M846 900h2M876 901h2M877 901h2M909 901h2M869 902h2M870 902h2M876 903h2M872 904h2M885 904h2M888 905h2M885 906h2M889 906h2M874 907h2M865 908h2M874 908h2M877 908h2M879 908h2M884 908h2M864 909h2M872 909h2M877 909h2M866 910h2M859 911h2M867 911h2M884 911h2M864 912h2M866 912h2M875 912h2M862 913h2M871 913h2M859 914h2M856 915h2M858 915h2M860 915h2M849 916h2M857 916h2M863 916h2M867 916h2M863 917h2M869 917h2M833 919h2M843 919h2M849 919h2M853 919h2" stroke="#00ff55" stroke-width="2"/><path d="M1281 666h2M1254 681h2M1265 687h2M1180 719h2M1173 730h2M1167 731h2M1154 735h2M1155 737h2M1138 739h2M1147 739h2M1163 739h2M1146 740h2M1145 741h2M1135 746h2M1136 746h2M1150 746h2M1145 748h2M1133 751h2M1113 753h2M1115 753h2M1129 753h2M1123 755h2M1125 755h2M1114 756h2M1107 760h2M1133 762h2M1093 764h2M1099 764h2M1093 766h2M1117 766h2M1125 769h2M1102 770h2M1088 771h2M1098 772h2M1098 773h2M1088 775h2M1078 776h2M1072 777h2M1074 777h2M1080 778h2M1082 778h2M1110 778h2M1082 779h2M1084 779h2M1086 779h2M1068 780h2M1082 780h2M1062 781h2M1068 781h2M1067 782h2M1065 783h2M1073 783h2M1076 783h2M1077 783h2M1095 783h2M1059 784h2M1061 784h2M1079 785h2M1058 786h2M1060 787h2M1059 788h2M1062 788h2M1061 789h2M1057 790h2M1069 790h2M1073 790h2M1062 791h2M1063 791h2M1052 793h2M1048 795h2M1050 795h2M1066 795h2M1044 797h2M1034 798h2M1035 798h2M1045 798h2M1054 798h2M1034 799h2M1026 800h2M1031 800h2M1034 800h2M1037 800h2M1058 800h2M1062 800h2M1063 800h2M1040 801h2M1045 801h2M1035 802h2M1035 803h2M1019 804h2M1030 804h2M1038 804h2M1015 805h2M1016 805h2M1024 805h2M1031 805h2M1034 805h2M1017 806h2M1022 806h2M1039 806h2M1019 807h2M1021 807h2M1023 807h2M1026 807h2M1035 807h2M1039 807h2M1071 807h2M1014 808h2M1017 808h2M1025 808h2M1028 808h2M1030 808h2M1034 808h2M1018 809h2M1019 810h2M1020 810h2M1021 810h2M1023 810h2M1026 810h2M1033 810h2M1010 811h2M1027 811h2M1009 812h2M1011 812h2M1012 812h2M1020 812h2M1025 812h2M1028 812h2M1030 812h2M1015 813h2M1026 813h2M1009 814h2M1014 814h2M1025 814h2M1033 814h2M1004 815h2M1008 815h2M1017 815h2M1008 816h2M1017 816h2M1021 816h2M1003 817h2M995 818h2M1002 818h2M1005 818h2M1006 818h2M1009 818h2M1011 818h2M993 819h2M994 819h2M996 819h2M998 819h2M1001 819h2M1006 819h2M1007 819h2M996 820h2M998 820h2M1000 820h2M992 821h2M994 821h2M1000 821h2M1002 821h2M1003 821h2M1004 821h2M1006 821h2M1010 821h2M1004 822h2M995 823h2M999 823h2M1017 823h2M981 824h2M984 824h2M994 824h2M995 824h2M996 824h2M997 824h2M1003 824h2M1005 824h2M1007 824h2M1020 824h2M987 825h2M993 825h2M999 825h2M1000 825h2M1003 825h2M982 826h2M986 826h2M987 826h2M993 826h2M999 826h2M1001 826h2M984 827h2M985 827h2M989 827h2M994 827h2M1002 827h2M977 829h2M982 829h2M983 829h2M984 829h2M987 829h2M989 829h2M990 829h2M994 829h2M981 830h2M983 830h2M986 830h2M991 830h2M994 830h2M975 831h2M987 831h2M992 831h2M993 831h2M996 831h2M1011 831h2M974 832h2M976 832h2M982 832h2M986 832h2M989 832h2M990 832h2M991 832h2M996 832h2M997 832h2M1002 832h2M968 833h2M975 833h2M979 833h2M980 833h2M982 833h2M984 833h2M985 833h2M988 833h2M990 833h2M996 833h2M997 833h2M1015 833h2M968 834h2M969 834h2M970 834h2M975 834h2M976 834h2M982 834h2M984 834h2M988 834h2M1007 834h2M962 835h2M975 835h2M977 835h2M981 835h2M984 835h2M964 836h2M965 836h2M976 836h2M979 836h2M982 836h2M984 836h2M990 836h2M991 836h2M999 836h2M959 837h2M969 837h2M971 837h2M972 837h2M981 837h2M982 837h2M986 837h2M988 837h2M1005 837h2M956 838h2M960 838h2M961 838h2M963 838h2M966 838h2M967 838h2M969 838h2M973 838h2M980 838h2M954 839h2M956 839h2M964 839h2M966 839h2M967 839h2M968 839h2M969 839h2M970 839h2M990 839h2M998 839h2M1001 839h2M962 840h2M963 840h2M966 840h2M971 840h2M974 840h2M977 840h2M981 840h2M986 840h2M952 841h2M953 841h2M955 841h2M957 841h2M960 841h2M968 841h2M970 841h2M972 841h2M981 841h2M951 842h2M953 842h2M961 842h2M965 842h2M968 842h2M976 842h2M953 843h2M954 843h2M962 843h2M963 843h2M966 843h2M967 843h2M944 844h2M950 844h2M951 844h2M954 844h2M957 844h2M958 844h2M961 844h2M963 844h2M965 844h2M972 844h2M973 844h2M974 844h2M945 845h2M948 845h2M949 845h2M957 845h2M964 845h2M946 846h2M947 846h2M949 846h2M951 846h2M957 846h2M959 846h2M962 846h2M966 846h2M975 846h2M941 847h2M945 847h2M947 847h2M948 847h2M949 847h2M950 847h2M955 847h2M957 847h2M958 847h2M959 847h2M962 847h2M942 848h2M943 848h2M951 848h2M957 848h2M959 848h2M963 848h2M965 848h2M939 849h2M942 849h2M945 849h2M946 849h2M948 849h2M949 849h2M950 849h2M955 849h2M956 849h2M959 849h2M966 849h2M932 850h2M939 850h2M941 850h2M942 850h2M944 850h2M945 850h2M946 850h2M947 850h2M958 850h2M959 850h2M963 850h2M933 851h2M936 851h2M939 851h2M942 851h2M946 851h2M951 851h2M966 851h2M967 851h2M938 852h2M944 852h2M947 852h2M949 852h2M950 852h2M954 852h2M962 852h2M929 853h2M932 853h2M936 853h2M937 853h2M939 853h2M940 853h2M953 853h2M954 853h2M959 853h2M929 854h2M931 854h2M932 854h2M933 854h2M934 854h2M935 854h2M941 854h2M944 854h2M947 854h2M968 854h2M928 855h2M929 855h2M930 855h2M931 855h2M932 855h2M933 855h2M934 855h2M935 855h2M937 855h2M938 855h2M943 855h2M947 855h2M953 855h2M955 855h2M959 855h2M927 856h2M928 856h2M929 856h2M930 856h2M934 856h2M935 856h2M937 856h2M938 856h2M940 856h2M945 856h2M947 856h2M948 856h2M978 856h2M923 857h2M925 857h2M926 857h2M927 857h2M928 857h2M930 857h2M932 857h2M935 857h2M937 857h2M938 857h2M939 857h2M945 857h2M946 857h2M947 857h2M949 857h2M950 857h2M951 857h2M956 857h2M966 857h2M925 858h2M928 858h2M933 858h2M934 858h2M935 858h2M943 858h2M949 858h2M953 858h2M955 858h2M963 858h2M967 858h2M916 859h2M919 859h2M920 859h2M924 859h2M927 859h2M929 859h2M930 859h2M932 859h2M934 859h2M935 859h2M939 859h2M949 859h2M950 859h2M918 860h2M919 860h2M920 860h2M923 860h2M927 860h2M929 860h2M931 860h2M933 860h2M937 860h2M938 860h2M940 860h2M945 860h2M956 860h2M918 861h2M921 861h2M922 861h2M924 861h2M925 861h2M928 861h2M930 861h2M932 861h2M933 861h2M934 861h2M937 861h2M938 861h2M939 861h2M942 861h2M943 861h2M947 861h2M916 862h2M918 862h2M919 862h2M920 862h2M921 862h2M923 862h2M924 862h2M925 862h2M927 862h2M929 862h2M930 862h2M931 862h2M932 862h2M933 862h2M935 862h2M937 862h2M940 862h2M951 862h2M913 863h2M914 863h2M915 863h2M916 863h2M917 863h2M918 863h2M919 863h2M921 863h2M922 863h2M924 863h2M925 863h2M927 863h2M931 863h2M938 863h2M943 863h2M949 863h2M909 864h2M911 864h2M917 864h2M920 864h2M921 864h2M927 864h2M930 864h2M932 864h2M938 864h2M940 864h2M910 865h2M911 865h2M912 865h2M913 865h2M914 865h2M915 865h2M917 865h2M920 865h2M923 865h2M924 865h2M925 865h2M927 865h2M928 865h2M934 865h2M906 866h2M909 866h2M910 866h2M912 866h2M918 866h2M926 866h2M933 866h2M934 866h2M936 866h2M939 866h2M909 867h2M910 867h2M914 867h2M918 867h2M920 867h2M921 867h2M922 867h2M923 867h2M924 867h2M926 867h2M929 867h2M931 867h2M934 867h2M905 868h2M906 868h2M907 868h2M909 868h2M910 868h2M912 868h2M919 868h2M921 868h2M924 868h2M930 868h2M932 868h2M933 868h2M935 868h2M942 868h2M904 869h2M905 869h2M906 869h2M909 869h2M910 869h2M911 869h2M914 869h2M915 869h2M920 869h2M921 869h2M923 869h2M924 869h2M930 869h2M932 869h2M901 870h2M902 870h2M904 870h2M907 870h2M908 870h2M913 870h2M914 870h2M915 870h2M916 870h2M917 870h2M918 870h2M919 870h2M921 870h2M925 870h2M927 870h2M931 870h2M935 870h2M899 871h2M903 871h2M905 871h2M907 871h2M909 871h2M911 871h2M912 871h2M916 871h2M927 871h2M899 872h2M903 872h2M907 872h2M908 872h2M909 872h2M911 872h2M912 872h2M913 872h2M914 872h2M920 872h2M926 872h2M927 872h2M897 873h2M899 873h2M903 873h2M904 873h2M905 873h2M908 873h2M910 873h2M912 873h2M919 873h2M923 873h2M895 874h2M897 874h2M898 874h2M900 874h2M902 874h2M903 874h2M908 874h2M909 874h2M910 874h2M914 874h2M915 874h2M918 874h2M919 874h2M922 874h2M891 875h2M892 875h2M893 875h2M894 875h2M899 875h2M901 875h2M903 875h2M905 875h2M911 875h2M920 875h2M923 875h2M934 875h2M889 876h2M890 876h2M891 876h2M893 876h2M894 876h2M896 876h2M899 876h2M900 876h2M901 876h2M905 876h2M909 876h2M915 876h2M917 876h2M924 876h2M927 876h2M887 877h2M892 877h2M894 877h2M896 877h2M899 877h2M900 877h2M901 877h2M904 877h2M905 877h2M906 877h2M907 877h2M908 877h2M910 877h2M911 877h2M912 877h2M913 877h2M914 877h2M918 877h2M886 878h2M888 878h2M890 878h2M891 878h2M892 878h2M893 878h2M894 878h2M895 878h2M898 878h2M899 878h2M902 878h2M904 878h2M906 878h2M909 878h2M914 878h2M926 878h2M885 879h2M886 879h2M888 879h2M889 879h2M894 879h2M896 879h2M897 879h2M898 879h2M899 879h2M912 879h2M913 879h2M916 879h2M917 879h2M918 879h2M882 880h2M886 880h2M887 880h2M890 880h2M895 880h2M897 880h2M899 880h2M903 880h2M906 880h2M907 880h2M909 880h2M910 880h2M914 880h2M916 880h2M925 880h2M880 881h2M882 881h2M885 881h2M887 881h2M888 881h2M889 881h2M897 881h2M902 881h2M903 881h2M908 881h2M919 881h2M927 881h2M878 882h2M882 882h2M884 882h2M885 882h2M886 882h2M891 882h2M894 882h2M896 882h2M897 882h2M898 882h2M900 882h2M901 882h2M902 882h2M904 882h2M906 882h2M907 882h2M910 882h2M912 882h2M916 882h2M917 882h2M925 882h2M881 883h2M887 883h2M890 883h2M891 883h2M892 883h2M893 883h2M898 883h2M899 883h2M901 883h2M902 883h2M903 883h2M888 884h2M890 884h2M892 884h2M894 884h2M897 884h2M900 884h2M901 884h2M903 884h2M905 884h2M908 884h2M910 884h2M889 885h2M896 885h2M897 885h2M898 885h2M904 885h2M910 885h2M894 886h2M895 886h2M896 886h2M903 886h2M906 886h2M919 886h2M868 887h2M870 887h2M871 887h2M888 887h2M896 887h2M902 887h2M868 888h2M869 888h2M870 888h2M871 888h2M895 888h2M900 888h2M882 889h2M883 889h2M888 889h2M891 889h2M895 889h2M896 889h2M900 889h2M880 890h2M885 890h2M889 890h2M891 890h2M892 890h2M894 890h2M896 890h2M897 890h2M898 890h2M883 891h2M886 891h2M888 891h2M889 891h2M891 891h2M893 891h2M895 891h2M899 891h2M884 892h2M888 892h2M898 892h2M901 892h2M880 893h2M886 893h2M887 893h2M888 893h2M890 893h2M895 893h2M880 894h2M881 894h2M882 894h2M886 894h2M890 894h2M872 895h2M874 895h2M875 895h2M880 895h2M881 895h2M890 895h2M895 895h2M873 896h2M886 896h2M887 896h2M892 896h2M897 896h2M873 897h2M884 897h2M886 897h2M887 897h2M877 898h2M882 898h2M884 898h2M885 898h2M886 898h2M866 899h2M879 899h2M880 899h2M889 899h2M890 899h2M873 900h2M877 900h2M884 900h2M888 900h2M864 901h2M871 901h2M873 901h2M875 901h2M887 901h2M864 902h2M866 902h2M867 902h2M868 902h2M876 902h2M877 902h2M878 902h2M890 902h2M865 903h2M866 903h2M868 903h2M870 903h2M872 903h2M874 903h2M878 903h2M879 903h2M871 904h2M876 904h2M866 905h2M867 905h2M876 905h2M878 905h2M879 905h2M864 906h2M866 906h2M867 906h2M870 906h2M871 906h2M872 906h2M874 906h2M876 906h2M856 907h2M857 907h2M859 907h2M862 907h2M865 907h2M879 907h2M857 908h2M858 908h2M860 908h2M864 908h2M871 908h2M865 909h2M867 909h2M868 909h2M870 909h2M871 909h2M858 910h2M860 910h2M876 910h2M858 911h2M870 911h2M857 912h2M861 912h2M865 912h2M869 912h2M882 912h2M848 913h2M850 913h2M852 913h2M854 913h2M848 914h2M851 914h2M853 914h2M855 914h2M862 914h2M848 915h2M850 915h2M851 915h2M854 915h2M857 915h2M851 916h2M815 917h2M849 917h2M851 917h2M855 917h2M859 917h2M861 917h2M813 918h2M850 918h2M852 918h2M856 918h2M861 918h2M811 919h2M813 919h2M815 919h2M834 919h2M836 919h2M841 919h2M845 919h2M847 919h2" stroke="#fff05a" stroke-width="2"/><path d="M1150 748h2M1059 796h2M1031 811h2M1017 814h2M996 822h2M997 823h2M1000 824h2M986 828h2M994 828h2M985 829h2M988 830h2M979 831h2M977 832h2M978 833h2M979 834h2M989 834h2M974 835h2M965 839h2M955 846h2M964 846h2M953 847h2M964 847h2M947 848h2M949 848h2M937 849h2M953 849h2M957 849h2M958 849h2M957 850h2M962 850h2M965 850h2M937 851h2M930 853h2M933 853h2M934 853h2M943 853h2M944 853h2M948 853h2M936 854h2M945 854h2M946 854h2M956 854h2M936 855h2M941 855h2M942 855h2M944 855h2M948 855h2M950 855h2M954 855h2M941 856h2M950 856h2M936 857h2M940 857h2M943 857h2M932 858h2M947 858h2M921 859h2M923 859h2M928 859h2M933 859h2M921 860h2M922 860h2M925 860h2M934 860h2M935 860h2M941 860h2M923 861h2M944 861h2M926 862h2M920 863h2M929 863h2M933 863h2M915 864h2M923 864h2M924 864h2M925 864h2M929 864h2M935 864h2M909 865h2M916 865h2M918 865h2M922 865h2M929 865h2M908 866h2M913 866h2M915 866h2M916 866h2M917 866h2M919 866h2M922 866h2M925 866h2M928 866h2M908 867h2M913 867h2M916 867h2M919 867h2M925 867h2M913 868h2M914 868h2M915 868h2M916 868h2M917 868h2M922 868h2M916 869h2M917 869h2M918 869h2M919 869h2M922 869h2M927 869h2M909 870h2M910 870h2M911 870h2M912 870h2M922 870h2M923 870h2M928 870h2M897 871h2M901 871h2M902 871h2M904 871h2M906 871h2M908 871h2M914 871h2M915 871h2M901 872h2M902 872h2M906 872h2M910 872h2M915 872h2M919 872h2M895 873h2M900 873h2M901 873h2M907 873h2M913 873h2M915 873h2M916 873h2M918 873h2M920 873h2M894 874h2M896 874h2M901 874h2M904 874h2M905 874h2M906 874h2M907 874h2M911 874h2M916 874h2M896 875h2M897 875h2M900 875h2M902 875h2M904 875h2M907 875h2M909 875h2M915 875h2M898 876h2M908 876h2M910 876h2M911 876h2M914 876h2M888 877h2M889 877h2M890 877h2M891 877h2M893 877h2M895 877h2M897 877h2M898 877h2M903 877h2M909 877h2M889 878h2M896 878h2M901 878h2M907 878h2M908 878h2M911 878h2M919 878h2M887 879h2M890 879h2M891 879h2M892 879h2M893 879h2M900 879h2M901 879h2M904 879h2M905 879h2M906 879h2M883 880h2M884 880h2M885 880h2M888 880h2M889 880h2M891 880h2M893 880h2M894 880h2M896 880h2M898 880h2M902 880h2M908 880h2M883 881h2M884 881h2M890 881h2M892 881h2M893 881h2M895 881h2M896 881h2M899 881h2M914 881h2M887 882h2M888 882h2M889 882h2M890 882h2M899 882h2M903 882h2M914 882h2M877 883h2M878 883h2M879 883h2M880 883h2M882 883h2M884 883h2M885 883h2M886 883h2M888 883h2M894 883h2M896 883h2M874 884h2M875 884h2M876 884h2M877 884h2M878 884h2M879 884h2M880 884h2M881 884h2M882 884h2M883 884h2M884 884h2M885 884h2M886 884h2M887 884h2M889 884h2M891 884h2M893 884h2M898 884h2M899 884h2M873 885h2M874 885h2M875 885h2M876 885h2M877 885h2M878 885h2M879 885h2M880 885h2M881 885h2M882 885h2M883 885h2M885 885h2M886 885h2M887 885h2M888 885h2M891 885h2M899 885h2M872 886h2M873 886h2M874 886h2M875 886h2M876 886h2M877 886h2M878 886h2M879 886h2M880 886h2M881 886h2M882 886h2M883 886h2M884 886h2M885 886h2M886 886h2M887 886h2M891 886h2M892 886h2M893 886h2M898 886h2M905 886h2M867 887h2M872 887h2M873 887h2M874 887h2M875 887h2M876 887h2M877 887h2M878 887h2M879 887h2M880 887h2M882 887h2M883 887h2M884 887h2M885 887h2M886 887h2M887 887h2M893 887h2M894 887h2M895 887h2M900 887h2M866 888h2M872 888h2M873 888h2M874 888h2M875 888h2M876 888h2M877 888h2M878 888h2M880 888h2M881 888h2M882 888h2M883 888h2M885 888h2M886 888h2M887 888h2M888 888h2M889 888h2M890 888h2M894 888h2M862 889h2M867 889h2M868 889h2M871 889h2M872 889h2M873 889h2M874 889h2M876 889h2M878 889h2M879 889h2M880 889h2M881 889h2M885 889h2M886 889h2M890 889h2M863 890h2M864 890h2M865 890h2M866 890h2M868 890h2M869 890h2M870 890h2M871 890h2M872 890h2M873 890h2M875 890h2M876 890h2M877 890h2M878 890h2M879 890h2M881 890h2M882 890h2M883 890h2M888 890h2M893 890h2M859 891h2M861 891h2M862 891h2M863 891h2M864 891h2M865 891h2M866 891h2M867 891h2M869 891h2M870 891h2M872 891h2M873 891h2M874 891h2M875 891h2M876 891h2M877 891h2M878 891h2M879 891h2M881 891h2M885 891h2M859 892h2M860 892h2M861 892h2M862 892h2M863 892h2M864 892h2M867 892h2M868 892h2M869 892h2M872 892h2M873 892h2M874 892h2M875 892h2M876 892h2M877 892h2M878 892h2M880 892h2M885 892h2M886 892h2M856 893h2M858 893h2M860 893h2M861 893h2M862 893h2M863 893h2M864 893h2M865 893h2M866 893h2M867 893h2M868 893h2M871 893h2M872 893h2M873 893h2M875 893h2M877 893h2M878 893h2M879 893h2M881 893h2M884 893h2M857 894h2M858 894h2M859 894h2M860 894h2M861 894h2M862 894h2M863 894h2M864 894h2M865 894h2M866 894h2M867 894h2M868 894h2M869 894h2M870 894h2M871 894h2M872 894h2M874 894h2M875 894h2M876 894h2M877 894h2M878 894h2M879 894h2M852 895h2M854 895h2M864 895h2M866 895h2M867 895h2M868 895h2M869 895h2M870 895h2M873 895h2M877 895h2M879 895h2M883 895h2M884 895h2M849 896h2M856 896h2M859 896h2M860 896h2M863 896h2M864 896h2M865 896h2M866 896h2M867 896h2M868 896h2M869 896h2M870 896h2M871 896h2M872 896h2M874 896h2M876 896h2M877 896h2M879 896h2M853 897h2M854 897h2M855 897h2M857 897h2M859 897h2M864 897h2M866 897h2M867 897h2M868 897h2M870 897h2M871 897h2M872 897h2M877 897h2M882 897h2M885 897h2M848 898h2M849 898h2M852 898h2M853 898h2M856 898h2M859 898h2M861 898h2M864 898h2M865 898h2M866 898h2M867 898h2M868 898h2M869 898h2M870 898h2M871 898h2M876 898h2M847 899h2M851 899h2M853 899h2M854 899h2M856 899h2M864 899h2M865 899h2M867 899h2M868 899h2M869 899h2M870 899h2M871 899h2M873 899h2M874 899h2M882 899h2M885 899h2M845 900h2M847 900h2M848 900h2M849 900h2M852 900h2M853 900h2M855 900h2M861 900h2M865 900h2M866 900h2M867 900h2M868 900h2M869 900h2M870 900h2M871 900h2M874 900h2M876 900h2M880 900h2M856 901h2M858 901h2M859 901h2M860 901h2M861 901h2M862 901h2M863 901h2M866 901h2M869 901h2M870 901h2M839 902h2M851 902h2M852 902h2M858 902h2M859 902h2M861 902h2M862 902h2M865 902h2M871 902h2M859 903h2M860 903h2M863 903h2M864 903h2M869 903h2M838 904h2M839 904h2M856 904h2M859 904h2M860 904h2M863 904h2M867 904h2M837 905h2M838 905h2M839 905h2M848 905h2M856 905h2M857 905h2M861 905h2M869 905h2M870 905h2M871 905h2M836 906h2M837 906h2M838 906h2M839 906h2M856 906h2M857 906h2M858 906h2M859 906h2M860 906h2M861 906h2M862 906h2M848 907h2M849 907h2M850 907h2M852 907h2M854 907h2M855 907h2M861 907h2M863 907h2M849 908h2M850 908h2M851 908h2M853 908h2M855 908h2M856 908h2M862 908h2M868 908h2M848 909h2M852 909h2M853 909h2M854 909h2M855 909h2M857 909h2M858 909h2M859 909h2M863 909h2M848 910h2M850 910h2M827 911h2M843 911h2M848 911h2M849 911h2M851 911h2M852 911h2M855 911h2M856 911h2M857 911h2M865 911h2M868 911h2M826 912h2M852 912h2M853 912h2M854 912h2M855 912h2M863 912h2M833 913h2M835 913h2M840 913h2M841 913h2M842 913h2M843 913h2M846 913h2M847 913h2M849 913h2M860 913h2M822 914h2M835 914h2M840 914h2M841 914h2M842 914h2M844 914h2M845 914h2M846 914h2M849 914h2M850 914h2M818 915h2M821 915h2M839 915h2M840 915h2M841 915h2M842 915h2M843 915h2M844 915h2M845 915h2M847 915h2M852 915h2M815 916h2M816 916h2M818 916h2M820 916h2M822 916h2M832 916h2M834 916h2M840 916h2M841 916h2M842 916h2M843 916h2M844 916h2M845 916h2M847 916h2M848 916h2M852 916h2M854 916h2M816 917h2M818 917h2M821 917h2M822 917h2M823 917h2M834 917h2M837 917h2M843 917h2M844 917h2M845 917h2M847 917h2M854 917h2M857 917h2M814 918h2M815 918h2M821 918h2M836 918h2M840 918h2M841 918h2M842 918h2M846 918h2M849 918h2M857 918h2M810 919h2M812 919h2M814 919h2M816 919h2M817 919h2M818 919h2M819 919h2M820 919h2M821 919h2M822 919h2M823 919h2M824 919h2M826 919h2M827 919h2M828 919h2M829 919h2M831 919h2M832 919h2M835 919h2M837 919h2M838 919h2M840 919h2" stroke="#ffa040" stroke-width="2"/><path d="M935 853h2M929 858h2M935 861h2M907 869h2M900 872h2M905 872h2M902 873h2M898 875h2M908 875h2M910 875h2M883 878h2M895 879h2M903 879h2M892 880h2M886 881h2M891 881h2M894 881h2M898 881h2M880 882h2M881 882h2M883 882h2M892 882h2M893 882h2M883 883h2M884 885h2M869 887h2M866 889h2M869 889h2M870 889h2M875 889h2M877 889h2M887 889h2M867 890h2M874 890h2M886 890h2M868 891h2M871 891h2M887 891h2M890 891h2M894 891h2M865 892h2M866 892h2M870 892h2M871 892h2M879 892h2M869 893h2M870 893h2M874 893h2M876 893h2M882 893h2M883 893h2M873 894h2M850 895h2M855 895h2M856 895h2M857 895h2M858 895h2M859 895h2M860 895h2M861 895h2M862 895h2M863 895h2M865 895h2M871 895h2M876 895h2M854 896h2M855 896h2M857 896h2M858 896h2M861 896h2M862 896h2M851 897h2M852 897h2M856 897h2M858 897h2M860 897h2M861 897h2M862 897h2M863 897h2M874 897h2M875 897h2M878 897h2M850 898h2M851 898h2M854 898h2M855 898h2M857 898h2M858 898h2M860 898h2M862 898h2M863 898h2M881 898h2M848 899h2M849 899h2M850 899h2M852 899h2M855 899h2M857 899h2M858 899h2M859 899h2M860 899h2M861 899h2M862 899h2M863 899h2M877 899h2M844 900h2M850 900h2M851 900h2M854 900h2M856 900h2M857 900h2M858 900h2M859 900h2M860 900h2M862 900h2M863 900h2M844 901h2M845 901h2M846 901h2M847 901h2M848 901h2M849 901h2M850 901h2M851 901h2M852 901h2M853 901h2M854 901h2M855 901h2M857 901h2M842 902h2M843 902h2M844 902h2M845 902h2M846 902h2M847 902h2M848 902h2M849 902h2M850 902h2M853 902h2M854 902h2M855 902h2M856 902h2M857 902h2M860 902h2M863 902h2M839 903h2M840 903h2M841 903h2M842 903h2M843 903h2M844 903h2M845 903h2M846 903h2M847 903h2M848 903h2M849 903h2M850 903h2M851 903h2M852 903h2M853 903h2M854 903h2M855 903h2M856 903h2M857 903h2M858 903h2M861 903h2M862 903h2M840 904h2M841 904h2M842 904h2M843 904h2M844 904h2M845 904h2M846 904h2M847 904h2M848 904h2M849 904h2M850 904h2M851 904h2M852 904h2M853 904h2M854 904h2M855 904h2M857 904h2M861 904h2M862 904h2M864 904h2M835 905h2M840 905h2M841 905h2M842 905h2M843 905h2M844 905h2M845 905h2M846 905h2M847 905h2M849 905h2M850 905h2M851 905h2M852 905h2M853 905h2M854 905h2M855 905h2M858 905h2M859 905h2M860 905h2M862 905h2M835 906h2M840 906h2M841 906h2M842 906h2M843 906h2M844 906h2M845 906h2M846 906h2M847 906h2M848 906h2M849 906h2M850 906h2M851 906h2M852 906h2M853 906h2M854 906h2M855 906h2M834 907h2M835 907h2M836 907h2M837 907h2M838 907h2M839 907h2M840 907h2M841 907h2M842 907h2M843 907h2M844 907h2M845 907h2M846 907h2M847 907h2M851 907h2M853 907h2M860 907h2M830 908h2M831 908h2M832 908h2M833 908h2M834 908h2M835 908h2M836 908h2M837 908h2M838 908h2M839 908h2M840 908h2M841 908h2M842 908h2M843 908h2M844 908h2M845 908h2M846 908h2M847 908h2M848 908h2M852 908h2M854 908h2M827 909h2M830 909h2M831 909h2M832 909h2M833 909h2M834 909h2M835 909h2M836 909h2M837 909h2M838 909h2M839 909h2M840 909h2M841 909h2M842 909h2M843 909h2M844 909h2M845 909h2M846 909h2M847 909h2M849 909h2M851 909h2M856 909h2M860 909h2M861 909h2M827 910h2M828 910h2M829 910h2M830 910h2M831 910h2M832 910h2M833 910h2M834 910h2M835 910h2M836 910h2M837 910h2M838 910h2M839 910h2M840 910h2M841 910h2M842 910h2M843 910h2M844 910h2M845 910h2M846 910h2M847 910h2M849 910h2M851 910h2M852 910h2M853 910h2M854 910h2M826 911h2M828 911h2M829 911h2M830 911h2M831 911h2M832 911h2M833 911h2M834 911h2M835 911h2M836 911h2M837 911h2M838 911h2M839 911h2M840 911h2M841 911h2M842 911h2M844 911h2M845 911h2M846 911h2M847 911h2M854 911h2M824 912h2M825 912h2M827 912h2M828 912h2M829 912h2M830 912h2M831 912h2M832 912h2M833 912h2M834 912h2M835 912h2M836 912h2M837 912h2M838 912h2M839 912h2M840 912h2M841 912h2M842 912h2M843 912h2M844 912h2M845 912h2M846 912h2M847 912h2M850 912h2M820 913h2M821 913h2M823 913h2M824 913h2M825 913h2M826 913h2M827 913h2M828 913h2M829 913h2M830 913h2M831 913h2M832 913h2M834 913h2M836 913h2M837 913h2M838 913h2M839 913h2M844 913h2M821 914h2M823 914h2M824 914h2M825 914h2M826 914h2M827 914h2M828 914h2M829 914h2M830 914h2M831 914h2M832 914h2M833 914h2M834 914h2M836 914h2M837 914h2M838 914h2M839 914h2M843 914h2M847 914h2M819 915h2M820 915h2M822 915h2M823 915h2M824 915h2M825 915h2M826 915h2M827 915h2M828 915h2M829 915h2M830 915h2M831 915h2M832 915h2M833 915h2M834 915h2M835 915h2M836 915h2M837 915h2M838 915h2M819 916h2M821 916h2M823 916h2M824 916h2M825 916h2M826 916h2M827 916h2M828 916h2M829 916h2M830 916h2M831 916h2M833 916h2M835 916h2M836 916h2M837 916h2M838 916h2M839 916h2M846 916h2M817 917h2M819 917h2M820 917h2M824 917h2M825 917h2M826 917h2M827 917h2M828 917h2M829 917h2M830 917h2M831 917h2M832 917h2M833 917h2M835 917h2M836 917h2M839 917h2M840 917h2M842 917h2M816 918h2M817 918h2M818 918h2M819 918h2M820 918h2M822 918h2M823 918h2M824 918h2M825 918h2M826 918h2M827 918h2M828 918h2M829 918h2M830 918h2M831 918h2M832 918h2M833 918h2M835 918h2M838 918h2M839 918h2M825 919h2M830 919h2M839 919h2" stroke="#ff2638" stroke-width="2"/><path d="M777.5 241V945.5H1878M769.5 945.50H777.5M773.0 911.95H777.5M773.0 878.40H777.5M773.0 844.85H777.5M773.0 811.30H777.5M769.5 777.75H777.5M773.0 744.20H777.5M773.0 710.65H777.5M773.0 677.10H777.5M773.0 643.55H777.5M769.5 610.00H777.5M773.0 576.45H777.5M773.0 542.90H777.5M773.0 509.35H777.5M773.0 475.80H777.5M769.5 442.25H777.5M773.0 408.70H777.5M773.0 375.15H777.5M773.0 341.60H777.5M773.0 308.05H777.5M769.5 274.50H777.5M777.50 945.5V953.5M829.94 945.5V950.0M882.38 945.5V950.0M934.82 945.5V950.0M987.26 945.5V950.0M1039.70 945.5V953.5M1092.14 945.5V950.0M1144.58 945.5V950.0M1197.02 945.5V950.0M1249.46 945.5V950.0M1301.90 945.5V953.5M1354.34 945.5V950.0M1406.78 945.5V950.0M1459.22 945.5V950.0M1511.66 945.5V950.0M1564.10 945.5V953.5M1616.54 945.5V950.0M1668.98 945.5V950.0M1721.42 945.5V950.0M1773.86 945.5V950.0M1826.30 945.5V953.5" stroke="#000" stroke-width="1" fill="none"/><g font-family="Liberation Sans" font-size="14" fill="#111"><text x="762.5" y="948.9" text-anchor="end">0</text><text x="777.5" y="970.8" text-anchor="middle">0</text><text x="762.5" y="781.1" text-anchor="end">1M</text><text x="1039.7" y="970.8" text-anchor="middle">1M</text><text x="762.5" y="613.4" text-anchor="end">2M</text><text x="1301.9" y="970.8" text-anchor="middle">2M</text><text x="762.5" y="445.6" text-anchor="end">3M</text><text x="1564.1" y="970.8" text-anchor="middle">3M</text><text x="762.5" y="277.9" text-anchor="end">4M</text><text x="1826.3" y="970.8" text-anchor="middle">4M</text></g><text x="1316" y="1006.7" font-family="Liberation Sans" font-size="20" letter-spacing="0.7" text-anchor="middle" fill="#111">FSC-A</text><text transform="translate(724 604) rotate(-90)" x="0" y="0" font-family="Liberation Sans" font-size="20" letter-spacing="0.7" text-anchor="middle" fill="#111">FSC-H</text></svg>
<div class="r" style="left:692px;top:1025px;width:1197px;height:26px;background:#dcdcdc;border-radius:11px"></div>
<div class="t" style="left:291.00px;width:2000px;text-align:center;top:1027.06px;font-size:16px;color:#111;letter-spacing:0.82px;">Parameters: 71, Event Count: 13784</div>
<svg style="left:0;top:0" width="1920" height="1080"><defs><filter id="sh" x="-20%" y="-20%" width="140%" height="140%"><feGaussianBlur stdDeviation="1.2"/></filter></defs><g transform="translate(2,2.5)" filter="url(#sh)" opacity="0.55"><path d="M140.5 173.8L64 227M69.5 214.5L63 227L77.5 225.5" stroke="#000" stroke-width="4.6" fill="none" stroke-linecap="round" stroke-linejoin="round"/></g><path d="M140.5 173.8L64 227M69.5 214.5L63 227L77.5 225.5" stroke="#f5000a" stroke-width="4.6" fill="none" stroke-linecap="round" stroke-linejoin="round"/></svg>
</body></html>
